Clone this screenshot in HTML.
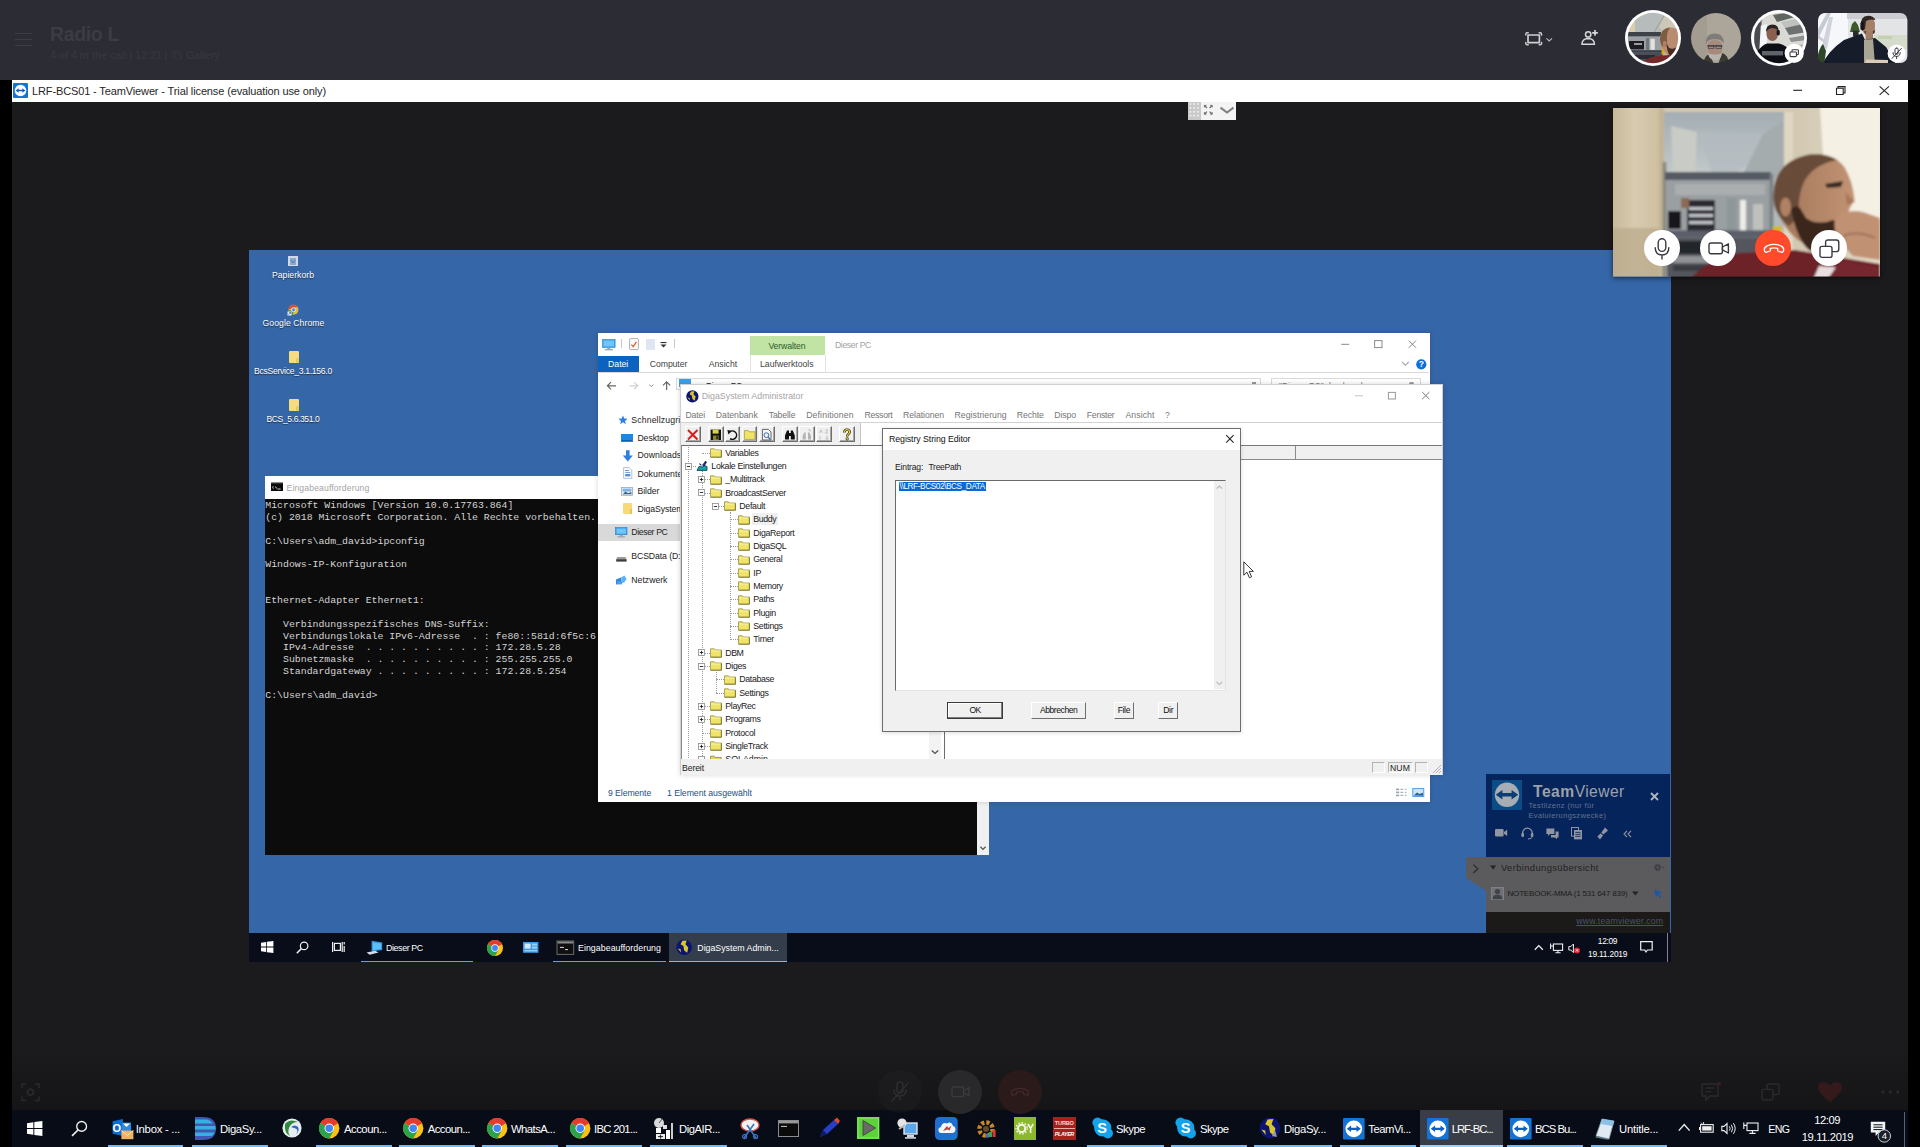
<!DOCTYPE html>
<html lang="de"><head><meta charset="utf-8"><title>Skype - LRF-BCS01 - TeamViewer</title>
<style>
html,body{margin:0;padding:0;background:#000;}
body{width:1920px;height:1147px;position:relative;overflow:hidden;font-family:"Liberation Sans",sans-serif;}
.a{position:absolute;box-sizing:border-box;}
.t{position:absolute;white-space:nowrap;height:20px;line-height:20px;}
svg{overflow:visible}
</style></head><body>
<!-- Skype header -->
<div class="a" style="left:0px;top:0px;width:1920px;height:80px;background:#2b2c34;"></div>
<div class="a" style="left:15px;top:33px;width:17px;height:1.4px;background:#3c3d45;"></div>
<div class="a" style="left:15px;top:39px;width:17px;height:1.4px;background:#3c3d45;"></div>
<div class="a" style="left:15px;top:45px;width:17px;height:1.4px;background:#3c3d45;"></div>
<span class="t" style="left:50.00px;top:24.00px;font-size:19.5px;color:#3b3c44;letter-spacing:-0.357px;font-weight:bold;">Radio L</span>
<span class="t" style="left:50.00px;top:45.00px;font-size:11px;color:#34353d;letter-spacing:-0.321px;font-weight:bold;">4 of 4 in the call | 12:21 |</span>
<span class="t" style="left:186.00px;top:45.00px;font-size:11px;color:#34353d;letter-spacing:-0.543px;font-weight:bold;">Gallery</span>
<svg class="a" style="left:172px;top:50.5px;" width="10" height="9" viewBox="0 0 10 9"><rect x="0.6" y="0.6" width="7" height="5.5" rx="1" fill="none" stroke="#34353d" stroke-width="1.2"/><rect x="3" y="3" width="6.4" height="5" rx="1" fill="#2b2c34" stroke="#34353d" stroke-width="1.2"/></svg>
<svg class="a" style="left:1524.6px;top:32.1px;" width="30" height="15" viewBox="0 0 30 15"><g fill="none" stroke="#d0d0d3" stroke-linecap="round" stroke-linejoin="round">
<rect x="3" y="3" width="11.4" height="7.6" stroke-width="1.7"/>
<path d="M0.8 3V2.4Q0.8 0.8 2.4 0.8H3.2M14.2 0.8H15Q16.6 0.8 16.6 2.4V3M16.6 10.6V11.2Q16.6 12.8 15 12.8H14.2M3.2 12.8H2.4Q0.8 12.8 0.8 11.2V10.6" stroke-width="1.5"/>
</g><path d="M21.4 6.4L24.2 8.9L27 6.4" fill="none" stroke="#bcbcc0" stroke-width="1.1"/></svg>
<svg class="a" style="left:1581px;top:29.4px;" width="18" height="17" viewBox="0 0 18 17"><g fill="none" stroke="#d8d8da" stroke-width="1.5" stroke-linecap="round" stroke-linejoin="round">
<circle cx="7.2" cy="5.4" r="2.7"/><path d="M0.9 15.2Q1.2 9.8 7.2 9.6Q13.2 9.8 13.5 15.2Z"/>
<path d="M14 1.6V6M11.8 3.8H16.2" stroke-width="1.7"/></g></svg>
<svg class="a" style="left:1625px;top:10px" width="56" height="56" viewBox="0 0 56 56">
<defs><clipPath id="av1"><circle cx="28" cy="28" r="25.2"/></clipPath><filter id="ab" x="-10%" y="-10%" width="120%" height="120%"><feGaussianBlur stdDeviation="0.55"/></filter></defs>
<circle cx="28" cy="28" r="28" fill="#fff"/>
<g clip-path="url(#av1)"><g filter="url(#ab)">
<rect x="-2" y="-2" width="60" height="60" fill="#b6bcbc"/>
<path d="M-2 -2H24L20 6H8L4 24H-2Z" fill="#cbc3ab"/>
<path d="M4 12H10V22H4Z" fill="#d9cfae"/>
<path d="M40 4L58 -2V24H46L34 18Z" fill="#cdc7b5"/>
<path d="M39 6L28 24" stroke="#a09c90" stroke-width="1"/>
<rect x="2" y="22" width="34" height="4.6" fill="#3e4248"/>
<rect x="2" y="26.6" width="36" height="14" fill="#9aa0a4"/>
<rect x="4" y="31" width="15" height="8.4" fill="#1c1d22"/>
<rect x="9" y="33" width="8" height="2" fill="#9a9ca0"/>
<rect x="25.4" y="28.8" width="4.4" height="11" fill="#e2e2de"/>
<rect x="21" y="28" width="3" height="12" fill="#70787c"/>
<rect x="2" y="40.2" width="36" height="2.6" fill="#3a3d4a"/>
<rect x="2" y="42.8" width="36" height="14" fill="#4a4d55"/>
<rect x="8" y="45" width="22" height="4" fill="#2a2c33"/>
<rect x="36.6" y="36.6" width="3" height="8" fill="#d6ae28"/>
<path d="M35 30Q35 18 45 17.4Q52 17.4 56 22V46H44Q36 40 35 30Z" fill="#b88c6f"/>
<path d="M35 30Q35 18.4 45 17.4Q41 22 42 32L38 37Q35.4 34 35 30Z" fill="#7d5b42"/>
<ellipse cx="39.6" cy="34" rx="1.8" ry="3.2" fill="#ad8064"/>
<path d="M41.4 33L44 38Q48 40 52 37L54 44Q50 48 45 46Q42 42 41.4 33Z" fill="#46291f"/>
<path d="M14 58Q18 48 32 46L44 45L52 48L58 44V58Z" fill="#742a2c"/>
</g></g></svg>
<svg class="a" style="left:1691px;top:13px" width="50" height="50" viewBox="0 0 50 50">
<defs><clipPath id="av2"><circle cx="25" cy="25" r="25"/></clipPath></defs>
<g clip-path="url(#av2)"><g filter="url(#ab)">
<rect x="-2" y="-2" width="54" height="54" fill="#aca599"/>
<path d="M-2 -2H16V52H-2Z" fill="#a39c91"/>
<path d="M12 52Q13 42 19 41L23 52ZM38 52Q37 41 31 40L27 52Z" fill="#3b3a30"/>
<path d="M16.2 34Q16 27 24 27Q31.4 27 31.2 34L30.6 40Q28 46 24 46Q19.6 46 17 40Z" fill="#a88a7b"/>
<path d="M15 31Q14 20.6 24 20.4Q33.6 20.6 32.6 31Q31 26 24 26.4Q17 26 15 31Z" fill="#7f7d7a"/>
<path d="M17 39.4Q19 42 24 41.4Q29 42 30.8 39.4Q30.6 47 24 47.4Q17.6 47 17 39.4Z" fill="#b7b4b0"/>
<rect x="16.4" y="32.2" width="15" height="1.5" fill="#43454b"/>
<rect x="17.4" y="32.6" width="5.4" height="3" fill="none" stroke="#43454b" stroke-width=".7"/>
<rect x="25" y="32.6" width="5.4" height="3" fill="none" stroke="#43454b" stroke-width=".7"/>
</g></g></svg>
<svg class="a" style="left:1751px;top:10px" width="56" height="56" viewBox="0 0 56 56">
<defs><clipPath id="av3"><circle cx="28" cy="28" r="25.2"/></clipPath></defs>
<circle cx="28" cy="28" r="28" fill="#fff"/>
<g clip-path="url(#av3)"><g filter="url(#ab)">
<rect x="-2" y="-2" width="60" height="60" fill="#d9d9d5"/>
<path d="M-2 -2H12L8 58H-2Z" fill="#8a8c8f"/>
<path d="M9 16L16 14V34L8 40Z" fill="#f4f5f6"/>
<path d="M4 14L10 12L8 44L3 46Z" fill="#4a4b50"/>
<path d="M22 5L40 2L44 7L26 12Z" fill="#5f655f"/>
<path d="M30 12L50 8L56 14L34 18Z" fill="#bfc1be"/>
<path d="M34 18L52 14L56 22L38 25Z" fill="#6d6f70"/>
<path d="M38 28L56 25V30L40 32Z" fill="#8f9190"/>
<path d="M36 36L56 34V40L38 42Z" fill="#b4b5b2"/>
<path d="M15.4 24Q15 15 21.4 15Q27.4 15.4 27 24Q26.6 30.6 21.4 31Q16 30.6 15.4 24Z" fill="#8a5e50"/>
<path d="M15 22Q15 14.6 21.6 14.6Q27.6 14.8 27.6 21Q25 17.6 21 18Q17 18.4 15 22Z" fill="#2c2422"/>
<rect x="25.6" y="20" width="3.2" height="5.4" rx="1.4" fill="#15151a"/>
<path d="M2 56Q4 38 16 33.4H28Q36 35 39 42L41 58H2Z" fill="#0d1018"/>
<path d="M11 41H32V45.4H11Z" fill="#7d8088" opacity=".75"/>
<path d="M20 54H34V57H20Z" fill="#b48a78"/>
</g></g>
<circle cx="43.2" cy="43.3" r="9.6" fill="#fff"/>
<g fill="none" stroke="#3a3b42" stroke-width="1.1"><rect x="39" y="42" width="6.4" height="4.6" rx="0.8"/><path d="M41 42V40.6Q41 39.8 41.8 39.8H46.6Q47.4 39.8 47.4 40.6V43.8Q47.4 44.6 46.6 44.6H45.4"/></g>
</svg>
<svg class="a" style="left:1818px;top:13px" width="90" height="50" viewBox="0 0 90 50">
<defs><clipPath id="av4"><rect width="89.4" height="50" rx="7"/></clipPath></defs>
<g clip-path="url(#av4)"><g filter="url(#ab)">
<rect x="-2" y="-2" width="94" height="54" fill="#e2e4e6"/>
<rect x="-2" y="-2" width="32" height="54" fill="#f5f7fa"/>
<path d="M-2 20L10 -2H14L0 26Z" fill="#c6cad2"/>
<path d="M4 34L11 4L15 4L9 36Z" fill="#d0d3da"/>
<path d="M0 22L8 28L7 30L-1 25Z" fill="#c9cdd4"/>
<rect x="29" y="-2" width="63" height="8" fill="#cbcdd2"/>
<rect x="56" y="22" width="36" height="14" fill="#d6dccb"/>
<rect x="60" y="23" width="14" height="3" fill="#b7cfa0" opacity=".7"/>
<path d="M32 19L34 11L37 8L40 12L42 19Z" fill="#3d5a2c"/>
<rect x="35" y="17.6" width="5.6" height="6" fill="#2a2b2e"/>
<path d="M-2 50Q1 34 5 31L8 38L6 52H-2Z" fill="#2f4a2a"/>
<path d="M43.6 14Q43 3.6 50 3.4Q57.6 3.6 57 14Q56.6 22 51 22.6Q45 22.6 43.6 14Z" fill="#a58069"/>
<path d="M43 13Q42 3 50 2.8Q56 3 57.4 7Q52 5.6 48 8L47 16L44 18Z" fill="#2e2522"/>
<rect x="42.4" y="9" width="3.6" height="8" rx="1.6" fill="#17171b"/>
<path d="M46 18Q47 23 52 23L56.6 20L57 16Q55 20 51 19.6Z" fill="#3e2c25"/>
<rect x="47.6" y="19" width="7.4" height="9" fill="#a27c66"/>
<path d="M4 52Q10 38 26 27L44 20.6L47 27L57 25L68 34L74 44L78 52Z" fill="#171c2a"/>
<path d="M46 27L55 26L57 52H46Z" fill="#a9a595"/>
<path d="M47 52H70V47L48 46.4Z" fill="#dccbb6"/>
</g></g>
<circle cx="78.6" cy="40.5" r="9" fill="#fff"/>
<g fill="none" stroke="#3a3b42" stroke-width="1" stroke-linecap="round"><rect x="77" y="35" width="3.2" height="6.4" rx="1.6"/><path d="M75 39.6Q75 43.4 78.6 43.4Q82.2 43.4 82.2 39.6M78.6 43.4V45.6M74 45.4L83.4 35.4"/></g>
</svg>
<!-- shared screen: TeamViewer window -->
<div class="a" style="left:12px;top:80px;width:1896px;height:1067px;background:#1b1b1d;"></div>
<div class="a" style="left:12px;top:80px;width:1896px;height:22px;background:#fff;"></div>
<svg class="a" style="left:13.4px;top:83px;" width="15" height="15" viewBox="0 0 16 16"><rect width="16" height="16" rx="1" fill="#1373d6"/><circle cx="8" cy="8" r="6.2" fill="#fff"/><path d="M2.8 8L6 5.6V7.2H10V5.6L13.2 8L10 10.4V8.8H6V10.4Z" fill="#0e5fc0"/></svg>
<span class="t" style="left:32.00px;top:80.60px;font-size:11px;color:#262626;letter-spacing:-0.127px;">LRF-BCS01 - TeamViewer - Trial license (evaluation use only)</span>
<svg class="a" style="left:1790px;top:84px;" width="104" height="14" viewBox="0 0 104 14"><g fill="none" stroke="#222" stroke-width="1.1"><path d="M3.2 6.3H12"/><path d="M46.5 4.2H53.2V10.5H46.5ZM48 4.2V2.6H55V9H53.2"/><path d="M89.6 2.4L99 10.8M99 2.4L89.6 10.8"/></g></svg>
<div class="a" style="left:1188px;top:102px;width:48px;height:17.5px;background:#f3f3f3;"></div>
<div class="a" style="left:1188px;top:102px;width:12.6px;height:17.5px;background:#c9c9c9;"></div>
<svg class="a" style="left:1188px;top:102px;" width="13" height="18" viewBox="0 0 13 18"><rect x="1.6" y="1.2" width="1.6" height="1.6" fill="#f4f4f4"/><rect x="1.6" y="5.1" width="1.6" height="1.6" fill="#f4f4f4"/><rect x="1.6" y="9" width="1.6" height="1.6" fill="#f4f4f4"/><rect x="1.6" y="12.9" width="1.6" height="1.6" fill="#f4f4f4"/><rect x="5.4" y="1.2" width="1.6" height="1.6" fill="#f4f4f4"/><rect x="5.4" y="5.1" width="1.6" height="1.6" fill="#f4f4f4"/><rect x="5.4" y="9" width="1.6" height="1.6" fill="#f4f4f4"/><rect x="5.4" y="12.9" width="1.6" height="1.6" fill="#f4f4f4"/><rect x="9.2" y="1.2" width="1.6" height="1.6" fill="#f4f4f4"/><rect x="9.2" y="5.1" width="1.6" height="1.6" fill="#f4f4f4"/><rect x="9.2" y="9" width="1.6" height="1.6" fill="#f4f4f4"/><rect x="9.2" y="12.9" width="1.6" height="1.6" fill="#f4f4f4"/></svg>
<svg class="a" style="left:1203px;top:104px;" width="32" height="14" viewBox="0 0 32 14"><g fill="none" stroke="#6a6a6a" stroke-width="1.2"><path d="M1.6 1.6L4 4M9 1.6L6.6 4M1.6 10L4 7.6M9 10L6.6 7.6"/><path d="M1.4 3.4V1.4H3.4M7.2 1.4H9.2V3.4M9.2 8.2V10.2H7.2M3.4 10.2H1.4V8.2" stroke-width="1"/></g><path d="M17.5 3.6L24 8.6L30.5 3.6" fill="none" stroke="#808080" stroke-width="2"/></svg>
<!-- remote desktop -->
<div class="a" style="left:249px;top:249.5px;width:1422px;height:712.5px;background:#3566a8;"></div>
<svg class="a" style="left:287px;top:255px;" width="12" height="12" viewBox="0 0 12 12"><rect x="1" y="1" width="10" height="10" fill="#cfd9e6"/><rect x="3" y="3" width="6" height="7" fill="#8fa8c8"/><path d="M4 5L6 8L8 5" stroke="#3d7fd0" fill="none"/></svg>
<span class="t" style="left:272.00px;top:264.50px;font-size:8.6px;color:#fff;letter-spacing:0.041px;text-shadow:0 1px 1px rgba(0,0,0,.55);">Papierkorb</span>
<svg class="a" style="left:287px;top:303.5px;" width="12" height="12" viewBox="0 0 12 12"><circle cx="6.5" cy="5.8" r="5" fill="#e8b93a"/><path d="M1.5 5.8A5 5 0 0 1 10.8 3.3H6.5Z" fill="#d9463a"/><path d="M1.5 5.8Q2 9.5 5.5 10.7L7.5 7Z" fill="#4d9e4f"/><circle cx="6.5" cy="5.8" r="2" fill="#4c8bf0" stroke="#fff" stroke-width=".7"/><rect x="0.5" y="7.5" width="4" height="4" fill="#e9eef6"/><path d="M1.3 10.6L3.6 8.4M3.6 8.4H2M3.6 8.4V10" stroke="#2c66c4" stroke-width=".7" fill="none"/></svg>
<span class="t" style="left:262.50px;top:312.50px;font-size:8.6px;color:#fff;letter-spacing:0.099px;text-shadow:0 1px 1px rgba(0,0,0,.55);">Google Chrome</span>
<div class="a" style="left:288.5px;top:351px;width:10px;height:11.5px;background:#f7dc7e;border-radius:1px;"></div>
<div class="a" style="left:296px;top:358px;width:2.5px;height:4.5px;background:#e9c85e;"></div>
<span class="t" style="left:254.00px;top:360.80px;font-size:8.6px;color:#fff;letter-spacing:-0.283px;text-shadow:0 1px 1px rgba(0,0,0,.55);">BcsService_3.1.156.0</span>
<div class="a" style="left:288.5px;top:399px;width:10px;height:11.5px;background:#f7dc7e;border-radius:1px;"></div>
<div class="a" style="left:296px;top:406px;width:2.5px;height:4.5px;background:#e9c85e;"></div>
<span class="t" style="left:266.50px;top:408.80px;font-size:8.6px;color:#fff;letter-spacing:-0.410px;text-shadow:0 1px 1px rgba(0,0,0,.55);">BCS_5.6.351.0</span>
<!-- cmd window -->
<div class="a" style="left:265px;top:476px;width:724px;height:379px;background:#0c0c0c;"></div>
<div class="a" style="left:265px;top:476px;width:724px;height:23px;background:#fff;"></div>
<svg class="a" style="left:271.2px;top:482.4px;" width="12" height="9" viewBox="0 0 12 9"><rect width="12" height="9" fill="#0a0a0a"/><rect x="0" y="0" width="12" height="1.3" fill="#8a8a8a"/><path d="M2.2 4.2Q1.4 5.4 2.2 6.6M4 4.6L6 6.4M6.4 7H9.6" stroke="#e4e4e4" stroke-width=".9" fill="none"/></svg>
<span class="t" style="left:286.50px;top:477.60px;font-size:8.6px;color:#a4a4a4;letter-spacing:0.148px;">Eingabeaufforderung</span>
<div class="a" style="left:977px;top:499px;width:12px;height:356px;background:#f0f0f0;"></div>
<svg class="a" style="left:979px;top:844px;" width="8" height="8" viewBox="0 0 8 8"><path d="M1.4 2.8L4 5.4L6.6 2.8" fill="none" stroke="#555" stroke-width="1.3"/></svg>
<span class="t" style="left:265.3px;top:496.00px;font-size:9.86px;font-family:'Liberation Mono',monospace;color:#d4d4d4;letter-spacing:-0.002px;white-space:pre;">Microsoft Windows [Version 10.0.17763.864]</span>
<span class="t" style="left:265.3px;top:507.87px;font-size:9.86px;font-family:'Liberation Mono',monospace;color:#d4d4d4;letter-spacing:-0.002px;white-space:pre;">(c) 2018 Microsoft Corporation. Alle Rechte vorbehalten.</span>
<span class="t" style="left:265.3px;top:531.61px;font-size:9.86px;font-family:'Liberation Mono',monospace;color:#d4d4d4;letter-spacing:-0.002px;white-space:pre;">C:\Users\adm_david&gt;ipconfig</span>
<span class="t" style="left:265.3px;top:555.35px;font-size:9.86px;font-family:'Liberation Mono',monospace;color:#d4d4d4;letter-spacing:-0.002px;white-space:pre;">Windows-IP-Konfiguration</span>
<span class="t" style="left:265.3px;top:590.96px;font-size:9.86px;font-family:'Liberation Mono',monospace;color:#d4d4d4;letter-spacing:-0.002px;white-space:pre;">Ethernet-Adapter Ethernet1:</span>
<span class="t" style="left:265.3px;top:614.70px;font-size:9.86px;font-family:'Liberation Mono',monospace;color:#d4d4d4;letter-spacing:-0.002px;white-space:pre;">   Verbindungsspezifisches DNS-Suffix:</span>
<span class="t" style="left:265.3px;top:626.57px;font-size:9.86px;font-family:'Liberation Mono',monospace;color:#d4d4d4;letter-spacing:-0.002px;white-space:pre;">   Verbindungslokale IPv6-Adresse  . : fe80::581d:6f5c:6</span>
<span class="t" style="left:265.3px;top:638.44px;font-size:9.86px;font-family:'Liberation Mono',monospace;color:#d4d4d4;letter-spacing:-0.002px;white-space:pre;">   IPv4-Adresse  . . . . . . . . . . : 172.28.5.28</span>
<span class="t" style="left:265.3px;top:650.31px;font-size:9.86px;font-family:'Liberation Mono',monospace;color:#d4d4d4;letter-spacing:-0.002px;white-space:pre;">   Subnetzmaske  . . . . . . . . . . : 255.255.255.0</span>
<span class="t" style="left:265.3px;top:662.18px;font-size:9.86px;font-family:'Liberation Mono',monospace;color:#d4d4d4;letter-spacing:-0.002px;white-space:pre;">   Standardgateway . . . . . . . . . : 172.28.5.254</span>
<span class="t" style="left:265.3px;top:685.92px;font-size:9.86px;font-family:'Liberation Mono',monospace;color:#d4d4d4;letter-spacing:-0.002px;white-space:pre;">C:\Users\adm_david&gt;</span>
<!-- explorer window -->
<div class="a" style="left:597.5px;top:333.3px;width:832px;height:468.4px;background:#fff;box-shadow:0 0 5px rgba(0,0,0,.16);"></div>
<svg class="a" style="left:602.4px;top:338.6px;" width="14" height="12" viewBox="0 0 14 12"><rect x="0.5" y="0.5" width="12.6" height="8" fill="#39a3ee" stroke="#2a7fc8" stroke-width=".6"/><rect x="1.6" y="1.6" width="10.4" height="5.8" fill="#6ec6fb"/><rect x="5.2" y="8.6" width="3.2" height="1.6" fill="#9aa7b4"/><rect x="2.6" y="10.2" width="8.4" height="1.1" fill="#8c98a6"/></svg>
<div class="a" style="left:620.5px;top:339px;width:1px;height:9px;background:#c8c8c8;"></div>
<svg class="a" style="left:629px;top:338px;" width="11" height="13" viewBox="0 0 11 13"><rect x="0.6" y="0.6" width="8.8" height="11" rx="1" fill="#fdfdfd" stroke="#9a9a9a" stroke-width=".8"/><path d="M2.4 6.6L4.2 8.6L7.4 3.8" fill="none" stroke="#e0632a" stroke-width="1.3"/></svg>
<div class="a" style="left:646px;top:338.5px;width:9px;height:11.5px;background:#dfe5f3;"></div>
<svg class="a" style="left:660px;top:342px;" width="8" height="6" viewBox="0 0 8 6"><rect x="0.5" y="0" width="6" height="1.1" fill="#333"/><path d="M0.5 2.4H6.5L3.5 5.4Z" fill="#333"/></svg>
<div class="a" style="left:673.5px;top:339px;width:1px;height:9px;background:#c8c8c8;"></div>
<div class="a" style="left:750px;top:336px;width:75.3px;height:19.3px;background:#c1e4a5;"></div>
<span class="t" style="left:768.40px;top:336.20px;font-size:8.7px;color:#2c5a2a;letter-spacing:-0.112px;">Verwalten</span>
<span class="t" style="left:835.00px;top:334.60px;font-size:8.7px;color:#a2a2a2;letter-spacing:-0.405px;">Dieser PC</span>
<svg class="a" style="left:1338px;top:338px;" width="84" height="14" viewBox="0 0 84 14"><g fill="none" stroke="#8a8a8a" stroke-width="1"><path d="M3.2 6.3H11.2"/><rect x="36.6" y="2.6" width="7.4" height="7"/><path d="M70.8 2.6L78 9.8M78 2.6L70.8 9.8"/></g></svg>
<div class="a" style="left:598px;top:355.7px;width:41px;height:16.6px;background:#0b62bf;"></div>
<span class="t" style="left:608.10px;top:354.30px;font-size:8.7px;color:#fff;letter-spacing:-0.022px;">Datei</span>
<span class="t" style="left:649.80px;top:354.30px;font-size:8.7px;color:#444;letter-spacing:-0.087px;">Computer</span>
<span class="t" style="left:708.70px;top:354.30px;font-size:8.7px;color:#444;letter-spacing:-0.004px;">Ansicht</span>
<span class="t" style="left:760.00px;top:354.30px;font-size:8.7px;color:#444;letter-spacing:0.002px;">Laufwerktools</span>
<div class="a" style="left:750px;top:355.3px;width:1px;height:17px;background:#e4e4e4;"></div>
<div class="a" style="left:824.5px;top:355.3px;width:1px;height:17px;background:#e4e4e4;"></div>
<div class="a" style="left:598px;top:372px;width:831px;height:1px;background:#dadada;"></div>
<svg class="a" style="left:1401px;top:361px;" width="9" height="6" viewBox="0 0 9 6"><path d="M1 1L4.4 4.2L7.8 1" fill="none" stroke="#aaa" stroke-width="1.1"/></svg>
<svg class="a" style="left:1416px;top:358.6px;" width="11" height="11" viewBox="0 0 11 11"><circle cx="5.3" cy="5.3" r="5.1" fill="#0a6fd8"/></svg>
<span class="t" style="left:1418.70px;top:354.00px;font-size:8.5px;color:#fff;font-weight:bold;">?</span>
<svg class="a" style="left:605px;top:380px;" width="70" height="12" viewBox="0 0 70 12"><g fill="none" stroke-width="1.2"><path d="M11 5.8H2.6M6 2.2L2.4 5.8L6 9.4" stroke="#666"/><path d="M24.5 5.8H32.5M29.2 2.4L32.7 5.8L29.2 9.2" stroke="#d0d0d0"/><path d="M44.4 4.6L46.4 6.6L48.4 4.6" stroke="#888" stroke-width="1"/><path d="M61.6 10V2M58 5.4L61.6 1.8L65.2 5.4" stroke="#666"/></g></svg>
<div class="a" style="left:676px;top:377.7px;width:585px;height:12px;background:#fff;border:1px solid #d9d9d9;"></div>
<div class="a" style="left:679px;top:378.5px;width:12px;height:8px;background:#3aa0ea;"></div>
<div class="a" style="left:1271px;top:377.7px;width:150px;height:12px;background:#fff;border:1px solid #d9d9d9;"></div>
<span class="t" style="left:706.00px;top:376.00px;font-size:8.7px;color:#222;letter-spacing:-0.405px;">Dieser PC</span>
<span class="t" style="left:1279.00px;top:376.00px;font-size:8.7px;color:#777;letter-spacing:-0.089px;">&quot;Dieser PC&quot; durchsuchen</span>
<div class="a" style="left:1252px;top:382px;width:4px;height:4px;background:#999;"></div>
<div class="a" style="left:1409px;top:382.4px;width:5px;height:4px;background:#999;border-radius:3px;"></div>
<svg class="a" style="left:617.5px;top:415.3px;" width="10" height="10" viewBox="0 0 10 10"><path d="M5 0.4L6.3 3.6L9.6 3.8L7 5.9L7.9 9.2L5 7.3L2.1 9.2L3 5.9L0.4 3.8L3.7 3.6Z" fill="#2f7fe0"/></svg>
<span class="t" style="left:631.30px;top:410.00px;font-size:8.7px;color:#222;letter-spacing:0.138px;">Schnellzugriff</span>
<div class="a" style="left:620.8px;top:433.6px;width:12.5px;height:8.8px;background:#1b87e8;"></div>
<div class="a" style="left:622.2px;top:440px;width:9.6px;height:1.4px;background:#0e5fb0;"></div>
<span class="t" style="left:637.40px;top:428.20px;font-size:8.7px;color:#222;letter-spacing:-0.059px;">Desktop</span>
<svg class="a" style="left:622px;top:449.6px;" width="12" height="12" viewBox="0 0 12 12"><path d="M4 0.3H7.6V5.4H10.8L5.8 11.4L0.8 5.4H4Z" fill="#2e7fdf"/></svg>
<span class="t" style="left:637.40px;top:445.40px;font-size:8.7px;color:#222;letter-spacing:0.106px;">Downloads</span>
<svg class="a" style="left:622.6px;top:467px;" width="10" height="12" viewBox="0 0 10 12"><path d="M0.6 0.6H6.2L8.8 3.2V11.4H0.6Z" fill="#fbfcfe" stroke="#a9b3c0" stroke-width=".8"/><rect x="2.2" y="3" width="3.6" height="1" fill="#4b8fe0"/><rect x="2.2" y="5" width="5" height="1" fill="#6ea5e6"/><rect x="2.2" y="7" width="5" height="2.4" fill="#4b8fe0"/></svg>
<span class="t" style="left:637.40px;top:463.60px;font-size:8.7px;color:#222;letter-spacing:0.057px;">Dokumente</span>
<svg class="a" style="left:621px;top:487px;" width="12" height="9" viewBox="0 0 12 9"><rect x="0.5" y="0.5" width="11" height="7.8" fill="#eef3f8" stroke="#9aa6b4" stroke-width=".8"/><rect x="1.6" y="1.6" width="8.8" height="3" fill="#7fb4ea"/><path d="M1.6 7.2L4.6 4.4L7 6.2L10.4 5V7.2Z" fill="#3b5f88"/></svg>
<span class="t" style="left:637.50px;top:481.30px;font-size:8.7px;color:#222;letter-spacing:-0.074px;">Bilder</span>
<div class="a" style="left:622.8px;top:503px;width:9.6px;height:11.4px;background:#f8d977;border-radius:1px;"></div>
<div class="a" style="left:629.8px;top:509px;width:2.6px;height:5.4px;background:#e9c45a;"></div>
<span class="t" style="left:637.50px;top:498.80px;font-size:8.7px;color:#222;letter-spacing:-0.090px;">DigaSystem</span>
<div class="a" style="left:598px;top:523.9px;width:82.5px;height:17.2px;background:#d9d9d9;"></div>
<svg class="a" style="left:615px;top:527px;" width="13" height="11" viewBox="0 0 13 11"><rect x="0.5" y="0.5" width="11.5" height="7.2" fill="#39a3ee" stroke="#2a7fc8" stroke-width=".6"/><rect x="1.6" y="1.6" width="9.3" height="5" fill="#6ec6fb"/><rect x="4.6" y="7.8" width="3.2" height="1.6" fill="#9aa7b4"/><rect x="2.4" y="9.4" width="7.6" height="1" fill="#8c98a6"/></svg>
<span class="t" style="left:631.30px;top:522.40px;font-size:8.7px;color:#222;letter-spacing:-0.383px;">Dieser PC</span>
<svg class="a" style="left:616px;top:555.5px;" width="11" height="6" viewBox="0 0 11 6"><path d="M1.4 1H9.4L10.6 3.2H0.2Z" fill="#9a9a9a"/><rect x="0.2" y="3.2" width="10.4" height="2.4" fill="#3c3c3c"/></svg>
<span class="t" style="left:631.30px;top:546.20px;font-size:8.7px;color:#222;letter-spacing:-0.098px;">BCSData (D:)</span>
<svg class="a" style="left:615px;top:574.6px;" width="12" height="10" viewBox="0 0 12 10"><path d="M1 4.6L6.4 2.2V8.6L1 9.6Z" fill="#2f8ae4"/><path d="M6.4 2.2L9.4 0.6L11.6 4L9.4 7.2L6.4 8.6Z" fill="#5db2f4"/><rect x="2" y="6.4" width="5" height="3" fill="#4aa0ee"/></svg>
<span class="t" style="left:631.30px;top:570.00px;font-size:8.7px;color:#222;letter-spacing:-0.007px;">Netzwerk</span>
<span class="t" style="left:608.00px;top:783.20px;font-size:8.7px;color:#234f8c;letter-spacing:-0.081px;">9 Elemente</span>
<span class="t" style="left:667.00px;top:783.20px;font-size:8.7px;color:#234f8c;letter-spacing:-0.030px;">1 Element ausgewählt</span>
<svg class="a" style="left:1395.5px;top:787.5px;" width="30" height="10" viewBox="0 0 30 10"><g fill="#9aa3ad"><rect x="0" y="0.6" width="3.2" height="1.6"/><rect x="0" y="3.6" width="3.2" height="1.6"/><rect x="0" y="6.6" width="3.2" height="1.6"/><rect x="4.4" y="0.8" width="3" height="1"/><rect x="4.4" y="3.8" width="3" height="1"/><rect x="4.4" y="6.8" width="3" height="1"/><rect x="9" y="0.8" width="1.6" height="1"/><rect x="9" y="3.8" width="1.6" height="1"/><rect x="9" y="6.8" width="1.6" height="1"/></g><rect x="16.8" y="0.6" width="11" height="8" fill="#cfe3f7" stroke="#4a90d9" stroke-width=".9"/><path d="M17.6 7.6L21 4.4L23.4 6L27 4.8V7.8Z" fill="#35618f"/></svg>
<!-- DigaSystem Administrator window -->
<div class="a" style="left:680px;top:384px;width:763px;height:391px;background:#fff;box-shadow:0 0 5px rgba(0,0,0,.16);border:1px solid #cfcfcf;"></div>
<svg class="a" style="left:685.5px;top:389.5px;" width="13" height="13" viewBox="0 0 13 13"><circle cx="6.4" cy="6.4" r="6.1" fill="#0d1470"/><path d="M5 1.4L8.4 1.2L7.4 4.2L9.6 6.6L8.8 10.8L6.4 9L5.8 5.4L3.6 4.2Z" fill="#d9c62e"/><path d="M1.4 7.4L3.6 8L4 10.6Z" fill="#d9c62e"/></svg>
<span class="t" style="left:701.70px;top:386.40px;font-size:8.8px;color:#a5a5a5;letter-spacing:0.023px;">DigaSystem Administrator</span>
<svg class="a" style="left:1352px;top:389px;" width="84" height="14" viewBox="0 0 84 14"><g fill="none" stroke-width="1"><path d="M3 6.8H11" stroke="#c4c4c4"/><rect x="36.4" y="3.4" width="7" height="6.6" stroke="#9a9a9a"/><path d="M70.2 3L77.4 10.2M77.4 3L70.2 10.2" stroke="#7a7a7a"/></g></svg>
<span class="t" style="left:685.50px;top:404.60px;font-size:8.7px;color:#757575;letter-spacing:-0.162px;">Datei</span>
<span class="t" style="left:715.80px;top:404.60px;font-size:8.7px;color:#757575;letter-spacing:-0.009px;">Datenbank</span>
<span class="t" style="left:768.70px;top:404.60px;font-size:8.7px;color:#757575;letter-spacing:-0.124px;">Tabelle</span>
<span class="t" style="left:806.20px;top:404.60px;font-size:8.7px;color:#757575;letter-spacing:0.138px;">Definitionen</span>
<span class="t" style="left:864.50px;top:404.60px;font-size:8.7px;color:#757575;letter-spacing:-0.282px;">Ressort</span>
<span class="t" style="left:903.00px;top:404.60px;font-size:8.7px;color:#757575;letter-spacing:-0.040px;">Relationen</span>
<span class="t" style="left:954.50px;top:404.60px;font-size:8.7px;color:#757575;letter-spacing:0.043px;">Registrierung</span>
<span class="t" style="left:1016.80px;top:404.60px;font-size:8.7px;color:#757575;letter-spacing:-0.094px;">Rechte</span>
<span class="t" style="left:1054.20px;top:404.60px;font-size:8.7px;color:#757575;letter-spacing:-0.049px;">Dispo</span>
<span class="t" style="left:1086.80px;top:404.60px;font-size:8.7px;color:#757575;letter-spacing:-0.256px;">Fenster</span>
<span class="t" style="left:1125.50px;top:404.60px;font-size:8.7px;color:#757575;letter-spacing:0.067px;">Ansicht</span>
<span class="t" style="left:1165.00px;top:404.60px;font-size:8.7px;color:#757575;">?</span>
<div class="a" style="left:681px;top:422.2px;width:761px;height:1.2px;background:#d2d2d2;"></div>
<div class="a" style="left:681px;top:423.4px;width:180px;height:21.6px;background:#f0f0f0;border-right:1px solid #c4c4c4;"></div>
<div class="a" style="left:685px;top:426.4px;width:15.6px;height:15.6px;background:#f0f0f0;border:1px solid;border-color:#fff #6e6e6e #6e6e6e #fff;box-shadow:inset -1px -1px 0 #a8a8a8;"></div>
<svg class="a" style="left:685px;top:426.6px;" width="15.6" height="15" viewBox="0 0 15.6 15"><path d="M3 3L12.5 12.5M12.5 3L3 12.5" stroke="#dc1c1c" stroke-width="2" fill="none"/></svg>
<div class="a" style="left:708px;top:426.4px;width:15.6px;height:15.6px;background:#f0f0f0;border:1px solid;border-color:#fff #6e6e6e #6e6e6e #fff;box-shadow:inset -1px -1px 0 #a8a8a8;"></div>
<svg class="a" style="left:708px;top:426.6px;" width="15.6" height="15" viewBox="0 0 15.6 15"><rect x="2.6" y="2.6" width="10.4" height="10.4" fill="#111"/><rect x="4.6" y="2.6" width="6" height="4" fill="#d9d14a"/><rect x="5" y="8.6" width="5.6" height="4.4" fill="#8a8630"/><rect x="8.4" y="9.2" width="1.4" height="3" fill="#111"/></svg>
<div class="a" style="left:724.6px;top:426.4px;width:15.6px;height:15.6px;background:#f0f0f0;border:1px solid;border-color:#fff #6e6e6e #6e6e6e #fff;box-shadow:inset -1px -1px 0 #a8a8a8;"></div>
<svg class="a" style="left:724.6px;top:426.6px;" width="15.6" height="15" viewBox="0 0 15.6 15"><path d="M4.4 5.2A4.2 4.2 0 1 1 5 11.6" fill="none" stroke="#111" stroke-width="1.5"/><path d="M2.4 3L6.8 3.8L3.4 7.4Z" fill="#111"/></svg>
<div class="a" style="left:741.8px;top:426.4px;width:15.6px;height:15.6px;background:#f0f0f0;border:1px solid;border-color:#fff #6e6e6e #6e6e6e #fff;box-shadow:inset -1px -1px 0 #a8a8a8;"></div>
<svg class="a" style="left:741.8px;top:426.6px;" width="15.6" height="15" viewBox="0 0 15.6 15"><path d="M2.4 3.6H6.4L7.4 4.8H13V12.4H2.4Z" fill="#f0e466" stroke="#9a9040" stroke-width=".7"/></svg>
<div class="a" style="left:759px;top:426.4px;width:15.6px;height:15.6px;background:#f0f0f0;border:1px solid;border-color:#fff #6e6e6e #6e6e6e #fff;box-shadow:inset -1px -1px 0 #a8a8a8;"></div>
<svg class="a" style="left:759px;top:426.6px;" width="15.6" height="15" viewBox="0 0 15.6 15"><path d="M3.4 2.4H9.4L12 5V13H3.4Z" fill="#f4f4f4" stroke="#444" stroke-width=".8"/><circle cx="7.4" cy="8.2" r="2.4" fill="none" stroke="#3a68b0" stroke-width="1"/><path d="M9 10L11.4 12.6" stroke="#3a68b0" stroke-width="1.2"/></svg>
<div class="a" style="left:782px;top:426.4px;width:15.6px;height:15.6px;background:#f0f0f0;border:1px solid;border-color:#fff #6e6e6e #6e6e6e #fff;box-shadow:inset -1px -1px 0 #a8a8a8;"></div>
<svg class="a" style="left:782px;top:426.6px;" width="15.6" height="15" viewBox="0 0 15.6 15"><path d="M3 12.6V8.6L5 3.6H7V12.6ZM12.8 12.6V8.6L10.8 3.6H8.8V12.6Z" fill="#111"/><rect x="6.6" y="6" width="2.6" height="3" fill="#111"/></svg>
<div class="a" style="left:799px;top:426.4px;width:15.6px;height:15.6px;background:#f0f0f0;border:1px solid;border-color:#fff #6e6e6e #6e6e6e #fff;box-shadow:inset -1px -1px 0 #a8a8a8;"></div>
<svg class="a" style="left:799px;top:426.6px;" width="15.6" height="15" viewBox="0 0 15.6 15"><path d="M3.6 12.6V9L5.2 5.6H6.8V12.6ZM12 12.6V9L10.6 5.6H9V12.6Z" fill="#b4b4b4"/><path d="M9 2.4L12 4M10.6 2V4.6" stroke="#c4c4c4" stroke-width=".8"/></svg>
<div class="a" style="left:816px;top:426.4px;width:15.6px;height:15.6px;background:#f0f0f0;border:1px solid;border-color:#fff #6e6e6e #6e6e6e #fff;box-shadow:inset -1px -1px 0 #a8a8a8;"></div>
<svg class="a" style="left:816px;top:426.6px;" width="15.6" height="15" viewBox="0 0 15.6 15"><path d="M3.4 6L4.8 2.8L6.2 6M9.4 3H12L9.4 6H12M4 9V12.6M11 8.6V12.6M9.6 11.2L11 12.6L12.4 11.2" stroke="#bdbdbd" stroke-width=".9" fill="none"/></svg>
<div class="a" style="left:839px;top:426.4px;width:15.6px;height:15.6px;background:#f0f0f0;border:1px solid;border-color:#fff #6e6e6e #6e6e6e #fff;box-shadow:inset -1px -1px 0 #a8a8a8;"></div>
<svg class="a" style="left:839px;top:426.6px;" width="15.6" height="15" viewBox="0 0 15.6 15"><path d="M5.4 5.4Q5.4 2.6 8 2.6Q10.6 2.6 10.6 5Q10.6 6.6 9 7.4Q8.2 7.9 8.2 9.4" fill="none" stroke="#111" stroke-width="2.4"/><path d="M5.4 5.4Q5.4 2.6 8 2.6Q10.6 2.6 10.6 5Q10.6 6.6 9 7.4Q8.2 7.9 8.2 9.4" fill="none" stroke="#e5d534" stroke-width="1.2"/><circle cx="8.2" cy="11.8" r="1.3" fill="#e5d534" stroke="#111" stroke-width=".6"/></svg>
<div class="a" style="left:681px;top:445.2px;width:264px;height:313.8px;background:#fff;border-top:1.6px solid #6d6d6d;border-left:1.6px solid #8a8a8a;"></div>
<div class="a" style="left:944px;top:446px;width:1.4px;height:313px;background:#6d6d6d;"></div>
<div class="a" style="left:929px;top:447px;width:12px;height:312px;background:#f3f3f3;"></div>
<svg class="a" style="left:930px;top:748px;" width="10" height="8" viewBox="0 0 10 8"><path d="M1.8 2.4L5 5.4L8.2 2.4" fill="none" stroke="#555" stroke-width="1.4"/></svg>
<div class="a" style="left:688px;top:447px;width:0px;height:311px;border-left:1px dotted #9a9a9a;"></div>
<div class="a" style="left:701.6px;top:470px;width:0px;height:288px;border-left:1px dotted #9a9a9a;"></div>
<div class="a" style="left:729.5px;top:512px;width:0px;height:128px;border-left:1px dotted #9a9a9a;"></div>
<div class="a" style="left:715.7px;top:672px;width:0px;height:21px;border-left:1px dotted #9a9a9a;"></div>
<div class="a" style="left:702px;top:452.5px;width:8px;height:0px;border-top:1px dotted #9a9a9a;"></div>
<svg class="a" style="left:710px;top:447px;" width="13" height="11" viewBox="0 0 13 11"><path d="M0.5 1.8H4.4L5.4 3H11.4V10.2H0.5Z" fill="#efe368" stroke="#8f8538" stroke-width=".7"/><path d="M1.2 4H10.4" stroke="#fbf6b0" stroke-width=".9"/><path d="M11.4 3.4V10.2H0.8" fill="none" stroke="#6f6626" stroke-width=".7"/></svg>
<span class="t" style="left:725.30px;top:442.50px;font-size:8.8px;color:#1a1a1a;letter-spacing:-0.300px;">Variables</span>
<div class="a" style="left:689px;top:465.8px;width:6.5px;height:0px;border-top:1px dotted #9a9a9a;"></div>
<svg class="a" style="left:695.5px;top:459.8px;" width="13" height="12" viewBox="0 0 13 12"><path d="M1 10.4H11V6.6L8 5.2L7 7L3 6.4Z" fill="#12a7a0" stroke="#0a2c5c" stroke-width=".8"/><path d="M6 5.2L9.4 0.8L11 2L8.4 6.4Z" fill="#15306e"/><path d="M3.4 3.6L5.4 5.4" stroke="#15306e" stroke-width="1.2"/></svg>
<svg class="a" style="left:684.5px;top:462.6px;" width="7" height="7" viewBox="0 0 7 7"><rect x="0.5" y="0.5" width="6" height="6" fill="#fff" stroke="#8c8c8c" stroke-width=".8"/><path d="M1.8 3.5H5.2" stroke="#222" stroke-width=".9"/></svg>
<span class="t" style="left:711.30px;top:455.80px;font-size:8.8px;color:#1a1a1a;letter-spacing:-0.305px;">Lokale Einstellungen</span>
<div class="a" style="left:702px;top:479.2px;width:8px;height:0px;border-top:1px dotted #9a9a9a;"></div>
<svg class="a" style="left:710px;top:473.7px;" width="13" height="11" viewBox="0 0 13 11"><path d="M0.5 1.8H4.4L5.4 3H11.4V10.2H0.5Z" fill="#efe368" stroke="#8f8538" stroke-width=".7"/><path d="M1.2 4H10.4" stroke="#fbf6b0" stroke-width=".9"/><path d="M11.4 3.4V10.2H0.8" fill="none" stroke="#6f6626" stroke-width=".7"/></svg>
<svg class="a" style="left:698.1px;top:476px;" width="7" height="7" viewBox="0 0 7 7"><rect x="0.5" y="0.5" width="6" height="6" fill="#fff" stroke="#8c8c8c" stroke-width=".8"/><path d="M1.8 3.5H5.2" stroke="#222" stroke-width=".9"/><path d="M3.5 1.8V5.2" stroke="#222" stroke-width=".9"/></svg>
<span class="t" style="left:725.30px;top:469.20px;font-size:8.8px;color:#1a1a1a;letter-spacing:-0.290px;">_Multitrack</span>
<div class="a" style="left:702px;top:492.5px;width:8px;height:0px;border-top:1px dotted #9a9a9a;"></div>
<svg class="a" style="left:710px;top:487px;" width="13" height="11" viewBox="0 0 13 11"><path d="M0.5 1.8H4.4L5.4 3H11.4V10.2H0.5Z" fill="#efe368" stroke="#8f8538" stroke-width=".7"/><path d="M1.2 4H10.4" stroke="#fbf6b0" stroke-width=".9"/><path d="M11.4 3.4V10.2H0.8" fill="none" stroke="#6f6626" stroke-width=".7"/></svg>
<svg class="a" style="left:698.1px;top:489.3px;" width="7" height="7" viewBox="0 0 7 7"><rect x="0.5" y="0.5" width="6" height="6" fill="#fff" stroke="#8c8c8c" stroke-width=".8"/><path d="M1.8 3.5H5.2" stroke="#222" stroke-width=".9"/></svg>
<span class="t" style="left:725.30px;top:482.50px;font-size:8.8px;color:#1a1a1a;letter-spacing:-0.328px;">BroadcastServer</span>
<div class="a" style="left:716px;top:505.8px;width:7.8px;height:0px;border-top:1px dotted #9a9a9a;"></div>
<svg class="a" style="left:723.8px;top:500.3px;" width="13" height="11" viewBox="0 0 13 11"><path d="M0.5 1.8H4.4L5.4 3H11.4V10.2H0.5Z" fill="#efe368" stroke="#8f8538" stroke-width=".7"/><path d="M1.2 4H10.4" stroke="#fbf6b0" stroke-width=".9"/><path d="M11.4 3.4V10.2H0.8" fill="none" stroke="#6f6626" stroke-width=".7"/></svg>
<svg class="a" style="left:712.2px;top:502.6px;" width="7" height="7" viewBox="0 0 7 7"><rect x="0.5" y="0.5" width="6" height="6" fill="#fff" stroke="#8c8c8c" stroke-width=".8"/><path d="M1.8 3.5H5.2" stroke="#222" stroke-width=".9"/></svg>
<span class="t" style="left:739.30px;top:495.80px;font-size:8.8px;color:#1a1a1a;letter-spacing:-0.299px;">Default</span>
<div class="a" style="left:730px;top:519.2px;width:8px;height:0px;border-top:1px dotted #9a9a9a;"></div>
<svg class="a" style="left:738px;top:513.7px;" width="13" height="11" viewBox="0 0 13 11"><path d="M0.5 1.8H4.4L5.4 3H11.4V10.2H0.5Z" fill="#efe368" stroke="#8f8538" stroke-width=".7"/><path d="M1.2 4H10.4" stroke="#fbf6b0" stroke-width=".9"/><path d="M11.4 3.4V10.2H0.8" fill="none" stroke="#6f6626" stroke-width=".7"/></svg>
<div class="a" style="left:751.7px;top:513.2px;width:26px;height:12px;background:#f0f0f0;"></div>
<span class="t" style="left:753.30px;top:509.20px;font-size:8.8px;color:#1a1a1a;letter-spacing:-0.374px;">Buddy</span>
<div class="a" style="left:730px;top:532.5px;width:8px;height:0px;border-top:1px dotted #9a9a9a;"></div>
<svg class="a" style="left:738px;top:527px;" width="13" height="11" viewBox="0 0 13 11"><path d="M0.5 1.8H4.4L5.4 3H11.4V10.2H0.5Z" fill="#efe368" stroke="#8f8538" stroke-width=".7"/><path d="M1.2 4H10.4" stroke="#fbf6b0" stroke-width=".9"/><path d="M11.4 3.4V10.2H0.8" fill="none" stroke="#6f6626" stroke-width=".7"/></svg>
<span class="t" style="left:753.30px;top:522.50px;font-size:8.8px;color:#1a1a1a;letter-spacing:-0.334px;">DigaReport</span>
<div class="a" style="left:730px;top:545.8px;width:8px;height:0px;border-top:1px dotted #9a9a9a;"></div>
<svg class="a" style="left:738px;top:540.3px;" width="13" height="11" viewBox="0 0 13 11"><path d="M0.5 1.8H4.4L5.4 3H11.4V10.2H0.5Z" fill="#efe368" stroke="#8f8538" stroke-width=".7"/><path d="M1.2 4H10.4" stroke="#fbf6b0" stroke-width=".9"/><path d="M11.4 3.4V10.2H0.8" fill="none" stroke="#6f6626" stroke-width=".7"/></svg>
<span class="t" style="left:753.30px;top:535.80px;font-size:8.8px;color:#1a1a1a;letter-spacing:-0.383px;">DigaSQL</span>
<div class="a" style="left:730px;top:559.1px;width:8px;height:0px;border-top:1px dotted #9a9a9a;"></div>
<svg class="a" style="left:738px;top:553.6px;" width="13" height="11" viewBox="0 0 13 11"><path d="M0.5 1.8H4.4L5.4 3H11.4V10.2H0.5Z" fill="#efe368" stroke="#8f8538" stroke-width=".7"/><path d="M1.2 4H10.4" stroke="#fbf6b0" stroke-width=".9"/><path d="M11.4 3.4V10.2H0.8" fill="none" stroke="#6f6626" stroke-width=".7"/></svg>
<span class="t" style="left:753.30px;top:549.10px;font-size:8.8px;color:#1a1a1a;letter-spacing:-0.335px;">General</span>
<div class="a" style="left:730px;top:572.5px;width:8px;height:0px;border-top:1px dotted #9a9a9a;"></div>
<svg class="a" style="left:738px;top:567px;" width="13" height="11" viewBox="0 0 13 11"><path d="M0.5 1.8H4.4L5.4 3H11.4V10.2H0.5Z" fill="#efe368" stroke="#8f8538" stroke-width=".7"/><path d="M1.2 4H10.4" stroke="#fbf6b0" stroke-width=".9"/><path d="M11.4 3.4V10.2H0.8" fill="none" stroke="#6f6626" stroke-width=".7"/></svg>
<span class="t" style="left:753.30px;top:562.50px;font-size:8.8px;color:#1a1a1a;letter-spacing:-0.312px;">IP</span>
<div class="a" style="left:730px;top:585.8px;width:8px;height:0px;border-top:1px dotted #9a9a9a;"></div>
<svg class="a" style="left:738px;top:580.3px;" width="13" height="11" viewBox="0 0 13 11"><path d="M0.5 1.8H4.4L5.4 3H11.4V10.2H0.5Z" fill="#efe368" stroke="#8f8538" stroke-width=".7"/><path d="M1.2 4H10.4" stroke="#fbf6b0" stroke-width=".9"/><path d="M11.4 3.4V10.2H0.8" fill="none" stroke="#6f6626" stroke-width=".7"/></svg>
<span class="t" style="left:753.30px;top:575.80px;font-size:8.8px;color:#1a1a1a;letter-spacing:-0.397px;">Memory</span>
<div class="a" style="left:730px;top:599.2px;width:8px;height:0px;border-top:1px dotted #9a9a9a;"></div>
<svg class="a" style="left:738px;top:593.7px;" width="13" height="11" viewBox="0 0 13 11"><path d="M0.5 1.8H4.4L5.4 3H11.4V10.2H0.5Z" fill="#efe368" stroke="#8f8538" stroke-width=".7"/><path d="M1.2 4H10.4" stroke="#fbf6b0" stroke-width=".9"/><path d="M11.4 3.4V10.2H0.8" fill="none" stroke="#6f6626" stroke-width=".7"/></svg>
<span class="t" style="left:753.30px;top:589.20px;font-size:8.8px;color:#1a1a1a;letter-spacing:-0.338px;">Paths</span>
<div class="a" style="left:730px;top:612.5px;width:8px;height:0px;border-top:1px dotted #9a9a9a;"></div>
<svg class="a" style="left:738px;top:607px;" width="13" height="11" viewBox="0 0 13 11"><path d="M0.5 1.8H4.4L5.4 3H11.4V10.2H0.5Z" fill="#efe368" stroke="#8f8538" stroke-width=".7"/><path d="M1.2 4H10.4" stroke="#fbf6b0" stroke-width=".9"/><path d="M11.4 3.4V10.2H0.8" fill="none" stroke="#6f6626" stroke-width=".7"/></svg>
<span class="t" style="left:753.30px;top:602.50px;font-size:8.8px;color:#1a1a1a;letter-spacing:-0.306px;">Plugin</span>
<div class="a" style="left:730px;top:625.8px;width:8px;height:0px;border-top:1px dotted #9a9a9a;"></div>
<svg class="a" style="left:738px;top:620.3px;" width="13" height="11" viewBox="0 0 13 11"><path d="M0.5 1.8H4.4L5.4 3H11.4V10.2H0.5Z" fill="#efe368" stroke="#8f8538" stroke-width=".7"/><path d="M1.2 4H10.4" stroke="#fbf6b0" stroke-width=".9"/><path d="M11.4 3.4V10.2H0.8" fill="none" stroke="#6f6626" stroke-width=".7"/></svg>
<span class="t" style="left:753.30px;top:615.80px;font-size:8.8px;color:#1a1a1a;letter-spacing:-0.298px;">Settings</span>
<div class="a" style="left:730px;top:639.2px;width:8px;height:0px;border-top:1px dotted #9a9a9a;"></div>
<svg class="a" style="left:738px;top:633.7px;" width="13" height="11" viewBox="0 0 13 11"><path d="M0.5 1.8H4.4L5.4 3H11.4V10.2H0.5Z" fill="#efe368" stroke="#8f8538" stroke-width=".7"/><path d="M1.2 4H10.4" stroke="#fbf6b0" stroke-width=".9"/><path d="M11.4 3.4V10.2H0.8" fill="none" stroke="#6f6626" stroke-width=".7"/></svg>
<span class="t" style="left:753.30px;top:629.20px;font-size:8.8px;color:#1a1a1a;letter-spacing:-0.332px;">Timer</span>
<div class="a" style="left:702px;top:652.5px;width:8px;height:0px;border-top:1px dotted #9a9a9a;"></div>
<svg class="a" style="left:710px;top:647px;" width="13" height="11" viewBox="0 0 13 11"><path d="M0.5 1.8H4.4L5.4 3H11.4V10.2H0.5Z" fill="#efe368" stroke="#8f8538" stroke-width=".7"/><path d="M1.2 4H10.4" stroke="#fbf6b0" stroke-width=".9"/><path d="M11.4 3.4V10.2H0.8" fill="none" stroke="#6f6626" stroke-width=".7"/></svg>
<svg class="a" style="left:698.1px;top:649.3px;" width="7" height="7" viewBox="0 0 7 7"><rect x="0.5" y="0.5" width="6" height="6" fill="#fff" stroke="#8c8c8c" stroke-width=".8"/><path d="M1.8 3.5H5.2" stroke="#222" stroke-width=".9"/><path d="M3.5 1.8V5.2" stroke="#222" stroke-width=".9"/></svg>
<span class="t" style="left:725.30px;top:642.50px;font-size:8.8px;color:#1a1a1a;letter-spacing:-0.489px;">DBM</span>
<div class="a" style="left:702px;top:665.8px;width:8px;height:0px;border-top:1px dotted #9a9a9a;"></div>
<svg class="a" style="left:710px;top:660.3px;" width="13" height="11" viewBox="0 0 13 11"><path d="M0.5 1.8H4.4L5.4 3H11.4V10.2H0.5Z" fill="#efe368" stroke="#8f8538" stroke-width=".7"/><path d="M1.2 4H10.4" stroke="#fbf6b0" stroke-width=".9"/><path d="M11.4 3.4V10.2H0.8" fill="none" stroke="#6f6626" stroke-width=".7"/></svg>
<svg class="a" style="left:698.1px;top:662.6px;" width="7" height="7" viewBox="0 0 7 7"><rect x="0.5" y="0.5" width="6" height="6" fill="#fff" stroke="#8c8c8c" stroke-width=".8"/><path d="M1.8 3.5H5.2" stroke="#222" stroke-width=".9"/></svg>
<span class="t" style="left:725.30px;top:655.80px;font-size:8.8px;color:#1a1a1a;letter-spacing:-0.337px;">Diges</span>
<div class="a" style="left:716px;top:679.2px;width:7.8px;height:0px;border-top:1px dotted #9a9a9a;"></div>
<svg class="a" style="left:723.8px;top:673.7px;" width="13" height="11" viewBox="0 0 13 11"><path d="M0.5 1.8H4.4L5.4 3H11.4V10.2H0.5Z" fill="#efe368" stroke="#8f8538" stroke-width=".7"/><path d="M1.2 4H10.4" stroke="#fbf6b0" stroke-width=".9"/><path d="M11.4 3.4V10.2H0.8" fill="none" stroke="#6f6626" stroke-width=".7"/></svg>
<span class="t" style="left:739.30px;top:669.20px;font-size:8.8px;color:#1a1a1a;letter-spacing:-0.353px;">Database</span>
<div class="a" style="left:716px;top:692.5px;width:7.8px;height:0px;border-top:1px dotted #9a9a9a;"></div>
<svg class="a" style="left:723.8px;top:687px;" width="13" height="11" viewBox="0 0 13 11"><path d="M0.5 1.8H4.4L5.4 3H11.4V10.2H0.5Z" fill="#efe368" stroke="#8f8538" stroke-width=".7"/><path d="M1.2 4H10.4" stroke="#fbf6b0" stroke-width=".9"/><path d="M11.4 3.4V10.2H0.8" fill="none" stroke="#6f6626" stroke-width=".7"/></svg>
<span class="t" style="left:739.30px;top:682.50px;font-size:8.8px;color:#1a1a1a;letter-spacing:-0.298px;">Settings</span>
<div class="a" style="left:702px;top:705.8px;width:8px;height:0px;border-top:1px dotted #9a9a9a;"></div>
<svg class="a" style="left:710px;top:700.3px;" width="13" height="11" viewBox="0 0 13 11"><path d="M0.5 1.8H4.4L5.4 3H11.4V10.2H0.5Z" fill="#efe368" stroke="#8f8538" stroke-width=".7"/><path d="M1.2 4H10.4" stroke="#fbf6b0" stroke-width=".9"/><path d="M11.4 3.4V10.2H0.8" fill="none" stroke="#6f6626" stroke-width=".7"/></svg>
<svg class="a" style="left:698.1px;top:702.6px;" width="7" height="7" viewBox="0 0 7 7"><rect x="0.5" y="0.5" width="6" height="6" fill="#fff" stroke="#8c8c8c" stroke-width=".8"/><path d="M1.8 3.5H5.2" stroke="#222" stroke-width=".9"/><path d="M3.5 1.8V5.2" stroke="#222" stroke-width=".9"/></svg>
<span class="t" style="left:725.30px;top:695.80px;font-size:8.8px;color:#1a1a1a;letter-spacing:-0.351px;">PlayRec</span>
<div class="a" style="left:702px;top:719.2px;width:8px;height:0px;border-top:1px dotted #9a9a9a;"></div>
<svg class="a" style="left:710px;top:713.7px;" width="13" height="11" viewBox="0 0 13 11"><path d="M0.5 1.8H4.4L5.4 3H11.4V10.2H0.5Z" fill="#efe368" stroke="#8f8538" stroke-width=".7"/><path d="M1.2 4H10.4" stroke="#fbf6b0" stroke-width=".9"/><path d="M11.4 3.4V10.2H0.8" fill="none" stroke="#6f6626" stroke-width=".7"/></svg>
<svg class="a" style="left:698.1px;top:716px;" width="7" height="7" viewBox="0 0 7 7"><rect x="0.5" y="0.5" width="6" height="6" fill="#fff" stroke="#8c8c8c" stroke-width=".8"/><path d="M1.8 3.5H5.2" stroke="#222" stroke-width=".9"/><path d="M3.5 1.8V5.2" stroke="#222" stroke-width=".9"/></svg>
<span class="t" style="left:725.30px;top:709.20px;font-size:8.8px;color:#1a1a1a;letter-spacing:-0.358px;">Programs</span>
<div class="a" style="left:702px;top:732.5px;width:8px;height:0px;border-top:1px dotted #9a9a9a;"></div>
<svg class="a" style="left:710px;top:727px;" width="13" height="11" viewBox="0 0 13 11"><path d="M0.5 1.8H4.4L5.4 3H11.4V10.2H0.5Z" fill="#efe368" stroke="#8f8538" stroke-width=".7"/><path d="M1.2 4H10.4" stroke="#fbf6b0" stroke-width=".9"/><path d="M11.4 3.4V10.2H0.8" fill="none" stroke="#6f6626" stroke-width=".7"/></svg>
<span class="t" style="left:725.30px;top:722.50px;font-size:8.8px;color:#1a1a1a;letter-spacing:-0.303px;">Protocol</span>
<div class="a" style="left:702px;top:745.8px;width:8px;height:0px;border-top:1px dotted #9a9a9a;"></div>
<svg class="a" style="left:710px;top:740.3px;" width="13" height="11" viewBox="0 0 13 11"><path d="M0.5 1.8H4.4L5.4 3H11.4V10.2H0.5Z" fill="#efe368" stroke="#8f8538" stroke-width=".7"/><path d="M1.2 4H10.4" stroke="#fbf6b0" stroke-width=".9"/><path d="M11.4 3.4V10.2H0.8" fill="none" stroke="#6f6626" stroke-width=".7"/></svg>
<svg class="a" style="left:698.1px;top:742.6px;" width="7" height="7" viewBox="0 0 7 7"><rect x="0.5" y="0.5" width="6" height="6" fill="#fff" stroke="#8c8c8c" stroke-width=".8"/><path d="M1.8 3.5H5.2" stroke="#222" stroke-width=".9"/><path d="M3.5 1.8V5.2" stroke="#222" stroke-width=".9"/></svg>
<span class="t" style="left:725.30px;top:735.80px;font-size:8.8px;color:#1a1a1a;letter-spacing:-0.315px;">SingleTrack</span>
<div class="a" style="left:682px;top:752px;width:246px;height:7px;overflow:hidden;">
<svg class="a" style="left:28px;top:1.6px" width="13" height="11" viewBox="0 0 13 11"><path d="M0.5 2.2H4.2L5.2 3.4H11.2V10.2H0.5Z" fill="#e6d65a" stroke="#7d7426" stroke-width=".7"/></svg>
<span class="t" style="left:43.3px;top:-2.6px;font-size:8.8px;color:#1a1a1a;">SQLAdmin</span>
<svg class="a" style="left:16px;top:4px" width="7" height="7" viewBox="0 0 7 7"><rect x="0.5" y="0.5" width="6" height="6" fill="#fff" stroke="#8c8c8c" stroke-width=".8"/></svg>
</div>
<div class="a" style="left:945.4px;top:445.2px;width:496.6px;height:14.8px;background:#f0f0f0;border-top:1.6px solid #7a7a7a;border-bottom:1.4px solid #8a8a8a;"></div>
<div class="a" style="left:1294.6px;top:446px;width:1.2px;height:14px;background:#8a8a8a;"></div>
<div class="a" style="left:681px;top:759px;width:761px;height:15.6px;background:#f0f0f0;"></div>
<span class="t" style="left:682.00px;top:758.20px;font-size:8.7px;color:#222;letter-spacing:-0.121px;">Bereit</span>
<div class="a" style="left:1372px;top:762px;width:13px;height:11.4px;border:1px solid;border-color:#b4b4b4 #fff #fff #b4b4b4;"></div>
<div class="a" style="left:1387.5px;top:762px;width:25px;height:11.4px;border:1px solid;border-color:#b4b4b4 #fff #fff #b4b4b4;"></div>
<div class="a" style="left:1414.5px;top:762px;width:13px;height:11.4px;border:1px solid;border-color:#b4b4b4 #fff #fff #b4b4b4;"></div>
<span class="t" style="left:1390.00px;top:758.20px;font-size:8.6px;color:#222;letter-spacing:0.138px;">NUM</span>
<svg class="a" style="left:1431px;top:763px;" width="11" height="11" viewBox="0 0 11 11"><path d="M10 2L2 10M10 5L5 10M10 8L8 10" stroke="#b0b0b0" stroke-width="1"/></svg>
<!-- Registry String Editor dialog -->
<div class="a" style="left:882.3px;top:428.2px;width:359px;height:304.2px;background:#f0f0f0;border:1px solid #6e6e6e;box-shadow:0 1px 4px rgba(0,0,0,.15);"></div>
<div class="a" style="left:883.3px;top:429.2px;width:357px;height:21.3px;background:#fff;"></div>
<span class="t" style="left:889.00px;top:429.30px;font-size:8.8px;color:#111;letter-spacing:-0.075px;">Registry String Editor</span>
<svg class="a" style="left:1224.6px;top:433.6px;" width="10" height="10" viewBox="0 0 10 10"><path d="M1.2 1.2L8.6 8.6M8.6 1.2L1.2 8.6" stroke="#222" stroke-width="1.1" fill="none"/></svg>
<span class="t" style="left:895.00px;top:456.70px;font-size:8.6px;color:#222;letter-spacing:-0.180px;">Eintrag:</span>
<span class="t" style="left:928.50px;top:456.70px;font-size:8.6px;color:#222;letter-spacing:-0.320px;">TreePath</span>
<div class="a" style="left:894.5px;top:480px;width:331px;height:210.5px;background:#fff;border:1.4px solid;border-color:#6a6a6a #e4e4e4 #e4e4e4 #6a6a6a;"></div>
<div class="a" style="left:1213.8px;top:481.4px;width:11px;height:208px;background:#f0f0f0;"></div>
<svg class="a" style="left:1214.6px;top:484.4px;" width="9" height="7" viewBox="0 0 9 7"><path d="M1.6 4.6L4.4 2L7.2 4.6" fill="none" stroke="#b8b8b8" stroke-width="1.1"/></svg>
<svg class="a" style="left:1214.6px;top:680px;" width="9" height="7" viewBox="0 0 9 7"><path d="M1.6 2L4.4 4.6L7.2 2" fill="none" stroke="#b8b8b8" stroke-width="1.1"/></svg>
<div class="a" style="left:898.7px;top:482px;width:87.2px;height:9.4px;background:#0a69d6;"></div>
<span class="t" style="left:899.60px;top:476.80px;font-size:8.2px;color:#fff;letter-spacing:-0.381px;">\\LRF-BCS02\BCS_DATA</span>
<div class="a" style="left:947.3px;top:702.4px;width:55.7px;height:16.6px;background:#f0f0f0;border:1px solid #3c3c3c;box-shadow:inset -1px -1px 0 #7a7a7a, inset 1px 1px 0 #fff;"></div>
<span class="t" style="left:969.56px;top:700.30px;font-size:8.6px;color:#111;letter-spacing:-0.621px;">OK</span>
<div class="a" style="left:1031px;top:702.4px;width:55.4px;height:16.6px;background:#f0f0f0;border:1px solid;border-color:#fff #6e6e6e #6e6e6e #fff;"></div>
<span class="t" style="left:1039.98px;top:700.30px;font-size:8.6px;color:#111;letter-spacing:-0.462px;">Abbrechen</span>
<div class="a" style="left:1113.6px;top:702.4px;width:20.6px;height:16.6px;background:#f0f0f0;border:1px solid;border-color:#fff #6e6e6e #6e6e6e #fff;"></div>
<span class="t" style="left:1117.66px;top:700.30px;font-size:8.6px;color:#111;letter-spacing:-0.346px;">File</span>
<div class="a" style="left:1158px;top:702.4px;width:20.4px;height:16.6px;background:#f0f0f0;border:1px solid;border-color:#fff #6e6e6e #6e6e6e #fff;"></div>
<span class="t" style="left:1163.26px;top:700.30px;font-size:8.6px;color:#111;letter-spacing:-0.366px;">Dir</span>
<svg class="a" style="left:1242.6px;top:561.4px;" width="12" height="19" viewBox="0 0 12 19"><path d="M0.8 0.8V14.2L4 11.2L6.4 16.8L8.6 15.8L6.2 10.4H10.4Z" fill="#fff" stroke="#222" stroke-width=".9" stroke-linejoin="round"/></svg>
<!-- remote taskbar -->
<div class="a" style="left:249px;top:932.5px;width:1422px;height:29.5px;background:#080d19;"></div>
<svg class="a" style="left:260.6px;top:941.4px;" width="12.4" height="12" viewBox="0 0 16 15.4"><path d="M0 2.2L6.6 1.2V7.2H0ZM7.6 1.05L16 0V7.2H7.6ZM0 8.2H6.6V14.2L0 13.2ZM7.6 8.2H16V15.4L7.6 14.35Z" fill="#fff"/></svg>
<svg class="a" style="left:296px;top:940.6px;" width="13" height="13" viewBox="0 0 16 16"><circle cx="10" cy="6" r="4.6" fill="none" stroke="#f0f0f0" stroke-width="1.5"/><path d="M6.6 9.4L1 15" stroke="#f0f0f0" stroke-width="1.8"/></svg>
<svg class="a" style="left:331.5px;top:941px;" width="13" height="12" viewBox="0 0 13 12"><g fill="none" stroke="#f0f0f0" stroke-width="1.2"><rect x="2.4" y="2.4" width="6" height="7"/><path d="M0.6 1V11M10.2 1V11M12.2 1V3.4M12.2 5V11"/></g></svg>
<svg class="a" style="left:366px;top:939.8px;" width="17" height="15.4" viewBox="0 0 17 15.4"><path d="M5.6 0.8L16.2 2.4V10L5.6 11.4Z" fill="#2f9ae8"/><path d="M6.8 2.4L15 3.6V9L6.8 10Z" fill="#5cc0f8"/><path d="M0.6 12.4L9 10.8L12.6 12.6L3.6 14.8Z" fill="#d5dce4"/></svg>
<span class="t" style="left:386.00px;top:937.50px;font-size:8.8px;color:#fff;letter-spacing:-0.367px;">Dieser PC</span>
<div class="a" style="left:360.6px;top:960.5px;width:112.8px;height:1.5px;background:#6f9fd4;"></div>
<svg class="a" style="left:486.7px;top:939.5px;" width="16" height="16" viewBox="0 0 20 20"><circle cx="10" cy="10" r="10" fill="#fbc116"/>
<path d="M10 10L1.34 5A10 10 0 0 1 18.66 5Z" fill="#e33b2e"/>
<path d="M10 10L1.34 5A10 10 0 0 0 10 20L14.3 12.5Z" fill="#2ba24c"/>
<path d="M10 10L18.66 5H10Z" fill="#e33b2e"/>
<circle cx="10" cy="10" r="4.6" fill="#fff"/><circle cx="10" cy="10" r="3.7" fill="#4285f4"/></svg>
<svg class="a" style="left:523.4px;top:942.4px;" width="15.4" height="10.8" viewBox="0 0 15.4 10.8"><rect width="15.4" height="10.8" fill="#3b9be6"/><rect x="1.6" y="1.6" width="6" height="5" fill="#d5e9fb"/><rect x="9" y="1.6" width="5" height="2" fill="#9dd0f8"/><rect x="9" y="4.6" width="5" height="2" fill="#9dd0f8"/><rect x="1.6" y="8" width="12.4" height="1.4" fill="#9dd0f8"/></svg>
<svg class="a" style="left:557px;top:940.5px;" width="16.7" height="13.4" viewBox="0 0 16.7 13.4"><rect width="16.7" height="13.4" fill="#101010" stroke="#6b6b6b" stroke-width="1"/><rect x="0.5" y="0.5" width="15.7" height="2" fill="#8a8a8a"/><path d="M3 6.4H7M8 8.6H11" stroke="#ddd" stroke-width="1"/></svg>
<span class="t" style="left:578.00px;top:937.50px;font-size:8.8px;color:#fff;letter-spacing:0.050px;">Eingabeaufforderung</span>
<div class="a" style="left:552.5px;top:960.5px;width:113px;height:1.5px;background:#6f9fd4;"></div>
<div class="a" style="left:669px;top:932.5px;width:118.4px;height:29.5px;background:#343d4b;"></div>
<div class="a" style="left:669px;top:960.5px;width:118.4px;height:1.5px;background:#8db5e2;"></div>
<svg class="a" style="left:676.4px;top:939.4px;" width="16.6" height="16.6" viewBox="0 0 13 13"><circle cx="6.4" cy="6.4" r="6.1" fill="#0d1470"/><path d="M5 1.4L8.4 1.2L7.4 4.2L9.6 6.6L8.8 10.8L6.4 9L5.8 5.4L3.6 4.2Z" fill="#d9c62e"/><path d="M1.4 7.4L3.6 8L4 10.6Z" fill="#d9c62e"/></svg>
<span class="t" style="left:697.30px;top:937.50px;font-size:8.8px;color:#fff;letter-spacing:-0.009px;">DigaSystem Admin...</span>
<svg class="a" style="left:1533.5px;top:944px;" width="10" height="7" viewBox="0 0 10 7"><path d="M0.8 5.8L4.8 1.6L8.8 5.8" fill="none" stroke="#f0f0f0" stroke-width="1.3"/></svg>
<svg class="a" style="left:1550px;top:942.6px;" width="13.4" height="11" viewBox="0 0 13.4 11"><g fill="none" stroke="#f0f0f0" stroke-width="1.1"><rect x="3.4" y="1" width="9.2" height="6.4"/><path d="M8 7.4V9.6M5.4 9.8H10.6M0.6 0.6V6M0.6 3H3.4"/></g></svg>
<svg class="a" style="left:1568px;top:942.6px;" width="13" height="11" viewBox="0 0 13 11"><path d="M0.8 3.6H2.8L5.4 1V9.6L2.8 7H0.8Z" fill="none" stroke="#f0f0f0" stroke-width="1"/><circle cx="9" cy="7.4" r="3" fill="#e8212e"/><path d="M7.8 6.2L10.2 8.6M10.2 6.2L7.8 8.6" stroke="#fff" stroke-width=".9"/></svg>
<span class="t" style="left:1597.80px;top:930.80px;font-size:8.4px;color:#fff;letter-spacing:-0.324px;">12:09</span>
<span class="t" style="left:1588.00px;top:944.00px;font-size:8.4px;color:#fff;letter-spacing:-0.202px;">19.11.2019</span>
<svg class="a" style="left:1640px;top:941.3px;" width="13" height="12" viewBox="0 0 13 12"><path d="M0.7 0.7H12.2V9H7.4L6 11L4.8 9H0.7Z" fill="none" stroke="#f0f0f0" stroke-width="1.2"/></svg>
<div class="a" style="left:1667.3px;top:933px;width:1px;height:29px;background:#7d8490;"></div>
<!-- teamviewer side panel -->
<div class="a" style="left:1485.5px;top:774px;width:184.7px;height:82.6px;background:#05245b;"></div>
<div class="a" style="left:1491.5px;top:780.2px;width:30px;height:29.6px;background:#0c4c86;"></div>
<svg class="a" style="left:1491.5px;top:780.2px;" width="30" height="29.6" viewBox="0 0 30 29.6"><circle cx="15" cy="14.8" r="12.2" fill="#a7adb5"/><path d="M3.8 14.8L10.4 10V13H19.6V10L26.2 14.8L19.6 19.6V16.6H10.4V19.6Z" fill="#0b3d73"/></svg>
<span class="t" style="left:1533.00px;top:782.30px;font-size:15.6px;color:#9da2aa;letter-spacing:0.523px;font-weight:bold;">Team</span>
<span class="t" style="left:1574.69px;top:782.30px;font-size:15.6px;color:#9da2aa;letter-spacing:0.418px;">Viewer</span>
<span class="t" style="left:1528.50px;top:796.30px;font-size:7.4px;color:#65738f;letter-spacing:0.400px;">Testlizenz (nur für</span>
<span class="t" style="left:1528.50px;top:806.20px;font-size:7.4px;color:#65738f;letter-spacing:0.425px;">Evaluierungszwecke)</span>
<svg class="a" style="left:1649.6px;top:792px;" width="9" height="9" viewBox="0 0 9 9"><path d="M1 1L8 8M8 1L1 8" stroke="#b2b6bd" stroke-width="1.8"/></svg>
<svg class="a" style="left:1495.3px;top:829.4px;" width="12.4" height="8.2" viewBox="0 0 12.4 8.2"><rect width="8.6" height="7.6" rx="1" fill="#9095a0"/><path d="M9 3L12.2 0.8V7L9 4.8Z" fill="#9095a0"/></svg>
<svg class="a" style="left:1520.6px;top:827.2px;" width="12.8" height="12.8" viewBox="0 0 12.8 12.8"><path d="M1.6 8V6A4.8 4.8 0 0 1 11.2 6V8" fill="none" stroke="#9095a0" stroke-width="1.3"/><rect x="0.4" y="6" width="2.6" height="4" rx="1" fill="#9095a0"/><rect x="9.8" y="6" width="2.6" height="4" rx="1" fill="#9095a0"/><path d="M11 10Q11 12 7 12" fill="none" stroke="#9095a0" stroke-width="1"/></svg>
<svg class="a" style="left:1545.5px;top:827.6px;" width="13" height="12" viewBox="0 0 13 12"><path d="M0.4 0.6H8.4V6H4L2 8V6H0.4Z" fill="#9095a0"/><path d="M5 7H9.6V3.4H12.6V9.4H11V11.2L9 9.4H5Z" fill="#9095a0"/></svg>
<svg class="a" style="left:1571.2px;top:827.2px;" width="11.4" height="12.6" viewBox="0 0 11.4 12.6"><rect x="0.5" y="0.5" width="7" height="8.6" fill="none" stroke="#9095a0" stroke-width="1"/><rect x="3" y="3" width="8" height="9.4" fill="#9095a0"/><path d="M4.4 5.4H9.6M4.4 7.4H9.6M4.4 9.4H9.6" stroke="#05245b" stroke-width=".8"/></svg>
<svg class="a" style="left:1596.5px;top:827px;" width="11.6" height="13" viewBox="0 0 11.6 13"><path d="M8 0.6L11 3.6L6.4 7.6L4.4 5.6Z" fill="#9095a0"/><path d="M3.8 6.2L6 8.4L3 12.4L0.4 9.6Z" fill="#9095a0"/></svg>
<svg class="a" style="left:1622.8px;top:829.6px;" width="9" height="8" viewBox="0 0 9 8"><path d="M4 0.8L1 4L4 7.2M8 0.8L5 4L8 7.2" fill="none" stroke="#9095a0" stroke-width="1.1"/></svg>
<div class="a" style="left:1485.5px;top:856.6px;width:184.7px;height:55.4px;background:#5b5b5d;"></div>
<svg class="a" style="left:1466px;top:856.6px;" width="20" height="34" viewBox="0 0 20 34"><path d="M2.4 0H20V34L1 21.6Q0 21 0 19.6V2.4Q0 0 2.4 0Z" fill="#5b5b5d"/><path d="M7.4 7.6L11.8 11.8L7.4 16" fill="none" stroke="#262626" stroke-width="1.1"/></svg>
<svg class="a" style="left:1490.2px;top:865px;" width="6.4" height="5" viewBox="0 0 6.4 5"><path d="M0 0.4H6.2L3.1 4.6Z" fill="#232323"/></svg>
<span class="t" style="left:1501.00px;top:857.80px;font-size:9.4px;color:#1f1f1f;letter-spacing:0.380px;">Verbindungsübersicht</span>
<svg class="a" style="left:1654px;top:862.6px;" width="12" height="9" viewBox="0 0 12 9"><circle cx="3.6" cy="4.4" r="2" fill="none" stroke="#3c3f46" stroke-width="1.6"/><circle cx="3.6" cy="4.4" r="3.3" fill="none" stroke="#3c3f46" stroke-width="1" stroke-dasharray="1.2 1.4"/><path d="M8.4 3.8H10.8L9.6 5.4Z" fill="#3c3f46"/></svg>
<div class="a" style="left:1491px;top:887.4px;width:13px;height:12.2px;background:#6e7074;border:1px solid #7d8085;"></div>
<svg class="a" style="left:1491px;top:887.4px;" width="13" height="12.2" viewBox="0 0 13 12.2"><circle cx="6.5" cy="4.6" r="2.6" fill="#3f4248"/><path d="M1.6 12.2Q1.6 7.8 6.5 7.8Q11.4 7.8 11.4 12.2Z" fill="#3f4248"/></svg>
<span class="t" style="left:1507.50px;top:883.60px;font-size:8px;color:#1c1c1c;letter-spacing:-0.176px;">NOTEBOOK-MMA (1 531 647 839)</span>
<svg class="a" style="left:1632px;top:891.4px;" width="6.8" height="5" viewBox="0 0 6.8 5"><path d="M0 0.4H6.6L3.3 4.6Z" fill="#232323"/></svg>
<svg class="a" style="left:1654.2px;top:889.4px;" width="9" height="9.6" viewBox="0 0 9 9.6"><path d="M0.4 0.4L8.4 3.6L5 5L7.6 8.2L6.4 9.2L3.8 6L1.8 8.4Z" fill="#1f55a8"/></svg>
<div class="a" style="left:1485.5px;top:912px;width:184.7px;height:20.5px;background:#1c1919;"></div>
<span class="t" style="left:1576.30px;top:911.20px;font-size:8.8px;color:#46536e;letter-spacing:0.133px;text-decoration:underline;">www.teamviewer.com</span>
<!-- skype self video overlay -->
<svg class="a" style="left:1612.5px;top:108.4px;box-shadow:0 1px 5px rgba(0,0,0,.6)" width="267" height="168.4" viewBox="0 0 267 168.4">
<defs>
<filter id="vb" x="-5%" y="-5%" width="110%" height="110%"><feGaussianBlur stdDeviation="0.9"/></filter>
<clipPath id="vc"><rect width="267" height="168.4"/></clipPath>
<linearGradient id="wallL" x1="0" x2="1"><stop offset="0" stop-color="#c6b697"/><stop offset=".5" stop-color="#d8cbb0"/><stop offset="1" stop-color="#cdbf9f"/></linearGradient>
<linearGradient id="ceil" x1="0" y1="0" x2="0" y2="1"><stop offset="0" stop-color="#a3adb3"/><stop offset="1" stop-color="#c3c9ca"/></linearGradient>
<linearGradient id="wallR" x1="0" x2="1"><stop offset="0" stop-color="#d2c8b2"/><stop offset="1" stop-color="#e4dcc9"/></linearGradient>
<linearGradient id="skin" x1="0" x2="1"><stop offset="0" stop-color="#a07458"/><stop offset="1" stop-color="#c29474"/></linearGradient>
</defs>
<g clip-path="url(#vc)"><g filter="url(#vb)">
<rect x="-4" y="-4" width="275" height="177" fill="#b4bab9"/>
<rect x="-4" y="-4" width="52" height="177" fill="url(#wallL)"/>
<path d="M-4 120H46V172H-4Z" fill="#b9aa8b" opacity=".7"/>
<path d="M47 -2H182V2L172 16H50Z" fill="#d2c8b2"/>
<path d="M50 4H172V66H50Z" fill="url(#ceil)"/>
<path d="M58 18L84 24L82 64L60 64Z" fill="#c9cbc6"/>
<path d="M84 24L150 26L142 52L120 66L100 66Z" fill="#b4bcc0" opacity=".8"/>
<path d="M150 26L172 12V70L128 70Z" fill="#a4acae"/>
<path d="M171 4H181V172H171Z" fill="#dfd7c3"/>
<path d="M180 0H271V172H180Z" fill="url(#wallR)"/>
<path d="M207 -2H271V112H214Z" fill="#f5f0e4"/>
<rect x="46" y="-2" width="5" height="174" fill="#c2b594"/>
<rect x="49.6" y="54" width="3.8" height="118" fill="#8b897f"/>
<rect x="52" y="64" width="106" height="8" fill="#555a63"/>
<rect x="53" y="72" width="104" height="51" fill="#9a9fa1"/>
<rect x="62" y="76" width="90" height="11" fill="#aaaeaf"/>
<rect x="55" y="103" width="13" height="18" fill="#15161a"/>
<rect x="74" y="92" width="28" height="31" fill="#2a2c33"/>
<rect x="76" y="99" width="24" height="3" fill="#bfc3c8"/><rect x="76" y="106" width="24" height="3" fill="#bfc3c8"/><rect x="76" y="113" width="24" height="3" fill="#bfc3c8"/>
<rect x="68" y="90" width="8" height="10" fill="#8a6b55"/>
<rect x="127" y="92" width="6" height="33" fill="#ecece8"/>
<rect x="114" y="90" width="9" height="34" fill="#8d9698"/>
<rect x="140" y="96" width="10" height="26" fill="#bfc1bd"/>
<rect x="52" y="122.4" width="110" height="7.4" fill="#5b5f69"/>
<rect x="54" y="130" width="106" height="42" fill="#54575d"/>
<rect x="60" y="133" width="62" height="13" fill="#242529"/>
<rect x="60" y="148" width="74" height="7" fill="#8f9194"/>
<rect x="60" y="157" width="74" height="6" fill="#3a3c42"/>
<rect x="156.6" y="66" width="3.8" height="106" fill="#7c8186"/>
<rect x="160" y="118" width="9" height="16" fill="#d8b628"/>
<path d="M76 172Q96 150 126 145L182 142L267 156V172Z" fill="#6c2228"/>
<path d="M200 172L206 158L232 160L240 172Z" fill="#e9dfe0"/>
<path d="M214 172L228 152L267 160V172Z" fill="#75262d"/>
<path d="M160.5 90Q160 52 198 46.4Q222 45 232 60Q240 74 241.6 92Q236 100 234 108L230 132Q214 146 196 138Q170 128 160.5 90Z" fill="url(#skin)"/>
<path d="M160.5 92Q159 54 196 46.6Q214 45 224 52Q202 56 192 72Q184 88 186 108L176 118Q162 108 160.5 92Z" fill="#684c39"/>
<ellipse cx="172.6" cy="99" rx="5.4" ry="9.6" fill="#b08165"/>
<path d="M178 101Q183 96 187 100L193 110Q204 118 220 112L229 116Q232 130 226 140Q212 148 196 142Q184 132 178 101Z" fill="#3a261c"/>
<path d="M222 112Q232 100 250 104L267 110V152L240 148Q232 140 226 132Q220 122 222 112Z" fill="#c19173"/>
<path d="M230 128Q244 122 262 130" fill="none" stroke="#9a6d54" stroke-width="1.6"/>
<path d="M212 76L230 73L228 79L214 80Z" fill="#3a2a22"/>
<path d="M232 84L242 94L234 97Z" fill="#a8775c"/>
</g></g></svg>
<div class="a" style="left:1644px;top:230.4px;width:36px;height:36px;background:#fff;border-radius:50%;"></div>
<div class="a" style="left:1700.4px;top:230.4px;width:36px;height:36px;background:#fff;border-radius:50%;"></div>
<div class="a" style="left:1755.4px;top:230.4px;width:36px;height:36px;background:#ff4a2b;border-radius:50%;"></div>
<div class="a" style="left:1811px;top:230.4px;width:36px;height:36px;background:#fff;border-radius:50%;"></div>
<svg class="a" style="left:1654px;top:237.6px;" width="16" height="22" viewBox="0 0 16 22"><g fill="none" stroke="#3a3b42" stroke-width="1.4" stroke-linecap="round"><rect x="4.2" y="0.8" width="7.6" height="12.6" rx="3.8"/><path d="M1.2 9.6Q1.2 17 8 17Q14.8 17 14.8 9.6M8 17V21"/></g></svg>
<svg class="a" style="left:1708px;top:242px;" width="22" height="13" viewBox="0 0 22 13"><g fill="none" stroke="#3a3b42" stroke-width="1.4" stroke-linejoin="round"><rect x="1" y="1" width="13.4" height="10.8" rx="2"/><path d="M14.4 5L20.4 1.8V11L14.4 7.8Z"/></g></svg>
<svg class="a" style="left:1762.5px;top:242.6px;" width="22" height="11" viewBox="0 0 22 11"><path d="M1.6 8.2Q0.4 4.6 4.2 2.8Q11 0 17.8 2.8Q21.6 4.6 20.4 8.2L19.6 9Q19 9.6 18.2 9.2L15 8Q14.4 7.6 14.6 6.8L14.8 5.4Q11 4.2 7.2 5.4L7.4 6.8Q7.6 7.6 7 8L3.8 9.2Q3 9.6 2.4 9Z" fill="none" stroke="#fff" stroke-width="1.3" stroke-linejoin="round"/></svg>
<svg class="a" style="left:1819px;top:238.6px;" width="21" height="20" viewBox="0 0 21 20"><g fill="none" stroke="#3a3b42" stroke-width="1.4"><rect x="1" y="7.4" width="12" height="11" rx="2"/><path d="M6.6 7.4V3.4Q6.6 1 9 1H17.4Q19.8 1 19.8 3.4V10.2Q19.8 12.6 17.4 12.6H13"/></g></svg>
<!-- host taskbar -->
<div class="a" style="left:12px;top:1110px;width:1896px;height:37px;background:#070c17;"></div>
<svg class="a" style="left:26.7px;top:1120.8px;" width="15.4" height="15" viewBox="0 0 16 15.4"><path d="M0 2.2L6.6 1.2V7.2H0ZM7.6 1.05L16 0V7.2H7.6ZM0 8.2H6.6V14.2L0 13.2ZM7.6 8.2H16V15.4L7.6 14.35Z" fill="#fff"/></svg>
<svg class="a" style="left:70.5px;top:1119.6px;" width="17" height="17" viewBox="0 0 16 16"><circle cx="10" cy="6" r="4.6" fill="none" stroke="#f0f0f0" stroke-width="1.3"/><path d="M6.6 9.4L1 15" stroke="#f0f0f0" stroke-width="1.6"/></svg>
<svg class="a" style="left:111.7px;top:1118.2px;" width="22" height="22" viewBox="0 0 22 22"><path d="M0.6 3.2L11 1V18L0.6 15.8Z" fill="#0a6fd0"/><rect x="10" y="4.6" width="9" height="9" fill="#2b8ae6"/><path d="M11 5.6H18L14.5 9Z" fill="#fff"/><rect x="9.4" y="12.6" width="12" height="8.6" fill="#f1b262"/><path d="M9.4 12.6L15.4 17.4L21.4 12.6" fill="none" stroke="#fbe3bd" stroke-width="1"/></svg>
<span class="t" style="left:112.52px;top:1118.20px;font-size:11px;color:#fff;font-weight:bold;">O</span>
<span class="t" style="left:135.70px;top:1119.30px;font-size:11.3px;color:#fff;letter-spacing:-0.255px;">Inbox - ...</span>
<div class="a" style="left:107.7px;top:1145px;width:75.6px;height:2px;background:#76b9ed;"></div>
<svg class="a" style="left:195px;top:1117.3px;" width="21" height="23" viewBox="0 0 21 23"><path d="M0 0H8Q21 0 21 11.5Q21 23 8 23H0Z" fill="#4058b0"/><path d="M0 2.6H12Q16 3.6 17.8 6.4H0ZM0 9H20Q20.8 10.6 20.6 12.4H0ZM0 15.4H19.4Q18.4 17.8 16.6 19H0Z" fill="#35b0e0"/></svg>
<span class="t" style="left:220.00px;top:1119.30px;font-size:11.3px;color:#fff;letter-spacing:-0.368px;">DigaSy...</span>
<div class="a" style="left:192.3px;top:1145px;width:76px;height:2px;background:#76b9ed;"></div>
<svg class="a" style="left:281.7px;top:1118px;" width="20" height="20" viewBox="0 0 20 20"><circle cx="10" cy="10" r="9.6" fill="#e6ecef"/><path d="M3 6Q8 0 16 4Q10 4 7.4 9Q5 14 8 18Q2 15 3 6Z" fill="#2f8a3c"/><path d="M9 9Q13 6 16 9Q18 13 14 16Q17 12 13.6 10.4Q11 9.6 9 9Z" fill="#2e67c8"/></svg>
<svg class="a" style="left:319.1px;top:1118.1px;" width="20.4" height="20.4" viewBox="0 0 20 20"><circle cx="10" cy="10" r="10" fill="#fbc116"/>
<path d="M10 10L1.34 5A10 10 0 0 1 18.66 5Z" fill="#e33b2e"/>
<path d="M10 10L1.34 5A10 10 0 0 0 10 20L14.3 12.5Z" fill="#2ba24c"/>
<path d="M10 10L18.66 5H10Z" fill="#e33b2e"/>
<circle cx="10" cy="10" r="4.6" fill="#fff"/><circle cx="10" cy="10" r="3.7" fill="#4285f4"/></svg>
<span class="t" style="left:344.00px;top:1119.30px;font-size:11.3px;color:#fff;letter-spacing:-0.490px;">Accoun...</span>
<div class="a" style="left:315.7px;top:1145px;width:76px;height:2px;background:#76b9ed;"></div>
<svg class="a" style="left:403.1px;top:1118.1px;" width="20.4" height="20.4" viewBox="0 0 20 20"><circle cx="10" cy="10" r="10" fill="#fbc116"/>
<path d="M10 10L1.34 5A10 10 0 0 1 18.66 5Z" fill="#e33b2e"/>
<path d="M10 10L1.34 5A10 10 0 0 0 10 20L14.3 12.5Z" fill="#2ba24c"/>
<path d="M10 10L18.66 5H10Z" fill="#e33b2e"/>
<circle cx="10" cy="10" r="4.6" fill="#fff"/><circle cx="10" cy="10" r="3.7" fill="#4285f4"/></svg>
<span class="t" style="left:427.70px;top:1119.30px;font-size:11.3px;color:#fff;letter-spacing:-0.534px;">Accoun...</span>
<div class="a" style="left:399px;top:1145px;width:76px;height:2px;background:#76b9ed;"></div>
<svg class="a" style="left:486.5px;top:1118.1px;" width="20.4" height="20.4" viewBox="0 0 20 20"><circle cx="10" cy="10" r="10" fill="#fbc116"/>
<path d="M10 10L1.34 5A10 10 0 0 1 18.66 5Z" fill="#e33b2e"/>
<path d="M10 10L1.34 5A10 10 0 0 0 10 20L14.3 12.5Z" fill="#2ba24c"/>
<path d="M10 10L18.66 5H10Z" fill="#e33b2e"/>
<circle cx="10" cy="10" r="4.6" fill="#fff"/><circle cx="10" cy="10" r="3.7" fill="#4285f4"/></svg>
<span class="t" style="left:511.00px;top:1119.30px;font-size:11.3px;color:#fff;letter-spacing:-0.553px;">WhatsA...</span>
<div class="a" style="left:482.3px;top:1145px;width:76px;height:2px;background:#76b9ed;"></div>
<svg class="a" style="left:569.8px;top:1118.1px;" width="20.4" height="20.4" viewBox="0 0 20 20"><circle cx="10" cy="10" r="10" fill="#fbc116"/>
<path d="M10 10L1.34 5A10 10 0 0 1 18.66 5Z" fill="#e33b2e"/>
<path d="M10 10L1.34 5A10 10 0 0 0 10 20L14.3 12.5Z" fill="#2ba24c"/>
<path d="M10 10L18.66 5H10Z" fill="#e33b2e"/>
<circle cx="10" cy="10" r="4.6" fill="#fff"/><circle cx="10" cy="10" r="3.7" fill="#4285f4"/></svg>
<span class="t" style="left:594.00px;top:1119.30px;font-size:11.3px;color:#fff;letter-spacing:-0.695px;">IBC 201...</span>
<div class="a" style="left:565.7px;top:1145px;width:76.3px;height:2px;background:#76b9ed;"></div>
<svg class="a" style="left:653.3px;top:1117px;" width="22" height="23" viewBox="0 0 22 23"><circle cx="6" cy="6" r="5" fill="#d8d8d8"/><path d="M6 6L9 2" stroke="#555" stroke-width="1"/><rect x="3" y="11" width="5" height="5" fill="#fff"/><rect x="10" y="8" width="4" height="4" fill="#ddd"/><rect x="3" y="17" width="9" height="5" fill="#eee"/><rect x="13" y="13" width="4" height="9" fill="#fff"/><rect x="18" y="6" width="2" height="16" fill="#ccc"/><path d="M5 19.6H10M7.6 17.6V21.6" stroke="#222" stroke-width="1"/></svg>
<span class="t" style="left:679.00px;top:1119.30px;font-size:11.3px;color:#fff;letter-spacing:-0.468px;">DigAIR...</span>
<div class="a" style="left:650px;top:1145px;width:76.7px;height:2px;background:#76b9ed;"></div>
<svg class="a" style="left:740px;top:1118px;" width="21" height="21" viewBox="0 0 21 21"><ellipse cx="10" cy="7" rx="9" ry="6" fill="#f2f2f2" stroke="#d6574a" stroke-width="1.4"/><path d="M4 20L14 6M16 20L7 7" stroke="#3d6fc4" stroke-width="1.6"/><circle cx="4.6" cy="18.6" r="2" fill="none" stroke="#3d6fc4" stroke-width="1.2"/><circle cx="15.6" cy="18.6" r="2" fill="none" stroke="#3d6fc4" stroke-width="1.2"/></svg>
<svg class="a" style="left:778.3px;top:1119.6px;" width="21" height="17" viewBox="0 0 21 17"><rect x="0.5" y="0.5" width="20" height="16" fill="#0b0b0b" stroke="#8c8c8c" stroke-width="1"/><rect x="1" y="1" width="19" height="2.4" fill="#9a9a9a"/><path d="M3 6.4H9" stroke="#ccc" stroke-width="1"/></svg>
<svg class="a" style="left:818.3px;top:1117px;" width="23" height="22" viewBox="0 0 23 22"><path d="M2 20L5 13L16 3L20 7L9 17Z" fill="#2540c8"/><path d="M16 3L19 0.6L22 4L20 7Z" fill="#d84a3a"/><path d="M2 20L5 13L9 17Z" fill="#0f1a60"/></svg>
<svg class="a" style="left:856.7px;top:1117.4px;" width="22.4" height="22" viewBox="0 0 22.4 22"><rect width="22.4" height="22" fill="#5bd13a"/><rect x="1" y="1" width="20.4" height="20" fill="none" stroke="#8cea6a" stroke-width="1"/><path d="M6 3.6L18.6 11L6 18.4Z" fill="#6a6a6a" stroke="#3a3a3a" stroke-width=".8"/></svg>
<svg class="a" style="left:896px;top:1117px;" width="22.4" height="23" viewBox="0 0 22.4 23"><rect x="8" y="6" width="13" height="11" fill="#5aa6ec" stroke="#dfe6ee" stroke-width="1.4"/><rect x="11" y="18" width="7" height="2" fill="#cfd6de"/><rect x="9" y="20" width="11" height="1.8" fill="#b9c2cc"/><circle cx="6" cy="6" r="4.6" fill="#e4e4e4"/><path d="M3 12L9 8" stroke="#bbb" stroke-width="2"/></svg>
<svg class="a" style="left:935px;top:1117px;" width="22.7" height="23" viewBox="0 0 22.7 23"><rect width="22.7" height="23" rx="4.4" fill="#1d6fd0"/><path d="M4 15Q2 11 6 10Q7 5 12 6.4Q16 4 18 9Q21.6 10 20 14.6Q19.4 16 17.6 16H6Q4.6 16 4 15Z" fill="#f4f7fa"/><path d="M8 14L12 9L13.6 11L16.4 8.4L14.6 13.6L12.6 12.4Z" fill="#d63a2c"/></svg>
<svg class="a" style="left:975px;top:1117.6px;" width="22" height="22" viewBox="0 0 22 22"><circle cx="11" cy="11" r="6.6" fill="none" stroke="#c8862a" stroke-width="4.4" stroke-dasharray="3.2 2"/><circle cx="11" cy="11" r="3" fill="#6a4a22"/><rect x="14" y="14" width="3" height="5" fill="#2fa84a"/><rect x="17.6" y="12" width="3" height="7" fill="#d8392e"/><rect x="11" y="15.6" width="2.6" height="4" fill="#3a6fd8"/></svg>
<div class="a" style="left:1014px;top:1117.4px;width:22px;height:22.6px;background:#8cb82e;"></div>
<svg class="a" style="left:1014px;top:1117.4px;" width="22" height="22.6" viewBox="0 0 22 22.6"><circle cx="7.6" cy="11.4" r="3.6" fill="none" stroke="#f4f8e6" stroke-width="2"/><circle cx="7.6" cy="11.4" r="5.6" fill="none" stroke="#f4f8e6" stroke-width="1.4" stroke-dasharray="1.6 1.6"/><path d="M14 7L16.6 11.4L19.2 7M16.6 11.4V16" fill="none" stroke="#f4f8e6" stroke-width="1.6"/></svg>
<div class="a" style="left:1052.7px;top:1117.4px;width:23.3px;height:22.6px;background:#a8201e;"></div>
<span class="t" style="left:1054.80px;top:1113.40px;font-size:5.6px;color:#f4d8d6;letter-spacing:-0.182px;font-weight:bold;">TURBO</span>
<span class="t" style="left:1054.80px;top:1123.60px;font-size:5.4px;color:#fff;letter-spacing:-0.401px;font-weight:bold;font-style:italic;">PLAYER</span>
<div class="a" style="left:1054px;top:1128px;width:20.6px;height:0.9px;background:#e8b0ac;"></div>
<svg class="a" style="left:1091.5px;top:1117.4px;" width="21.4" height="21.8" viewBox="0 0 21.4 21.8"><circle cx="10.7" cy="10.9" r="8.6" fill="#13a3ea"/><circle cx="5.6" cy="5.6" r="5.2" fill="#13a3ea"/><circle cx="15.8" cy="16.2" r="5.2" fill="#13a3ea"/></svg>
<span class="t" style="left:1097.36px;top:1118.40px;font-size:14.5px;color:#fff;font-weight:bold;">S</span>
<span class="t" style="left:1116.00px;top:1119.30px;font-size:11.3px;color:#fff;letter-spacing:-0.481px;">Skype</span>
<div class="a" style="left:1086.7px;top:1145px;width:77.3px;height:2px;background:#76b9ed;"></div>
<svg class="a" style="left:1175px;top:1117.4px;" width="21.4" height="21.8" viewBox="0 0 21.4 21.8"><circle cx="10.7" cy="10.9" r="8.6" fill="#13a3ea"/><circle cx="5.6" cy="5.6" r="5.2" fill="#13a3ea"/><circle cx="15.8" cy="16.2" r="5.2" fill="#13a3ea"/></svg>
<span class="t" style="left:1180.86px;top:1118.40px;font-size:14.5px;color:#fff;font-weight:bold;">S</span>
<span class="t" style="left:1200.00px;top:1119.30px;font-size:11.3px;color:#fff;letter-spacing:-0.621px;">Skype</span>
<div class="a" style="left:1170.7px;top:1145px;width:76.6px;height:2px;background:#76b9ed;"></div>
<svg class="a" style="left:1259px;top:1117.4px;" width="22" height="22" viewBox="0 0 22 22"><circle cx="11" cy="11" r="10.4" fill="#0d1470"/><path d="M8.6 2.4L14.4 2L12.6 7.2L16.4 11.2L15 18.4L11 15.4L10 9.2L6.2 7.2Z" fill="#d9c62e"/><path d="M2.4 12.6L6.2 13.6L6.8 18Z" fill="#d9c62e"/><path d="M13 19L16 13L18 20Z" fill="#9a9a9a"/></svg>
<span class="t" style="left:1284.00px;top:1119.30px;font-size:11.3px;color:#fff;letter-spacing:-0.334px;">DigaSy...</span>
<div class="a" style="left:1254.3px;top:1145px;width:77.4px;height:2px;background:#76b9ed;"></div>
<svg class="a" style="left:1343.3px;top:1117.6px;" width="21.6" height="21.6" viewBox="0 0 16 16"><rect width="16" height="16" rx="1" fill="#1373d6"/><circle cx="8" cy="8" r="6.2" fill="#fff"/><path d="M2.8 8L6 5.6V7.2H10V5.6L13.2 8L10 10.4V8.8H6V10.4Z" fill="#0e5fc0"/></svg>
<span class="t" style="left:1368.30px;top:1119.30px;font-size:11.3px;color:#fff;letter-spacing:-0.499px;">TeamVi...</span>
<div class="a" style="left:1340px;top:1145px;width:76px;height:2px;background:#76b9ed;"></div>
<div class="a" style="left:1420px;top:1110px;width:82.7px;height:37px;background:#393d46;"></div>
<svg class="a" style="left:1426.7px;top:1117.6px;" width="21.6" height="21.6" viewBox="0 0 16 16"><rect width="16" height="16" rx="1" fill="#1373d6"/><circle cx="8" cy="8" r="6.2" fill="#fff"/><path d="M2.8 8L6 5.6V7.2H10V5.6L13.2 8L10 10.4V8.8H6V10.4Z" fill="#0e5fc0"/></svg>
<span class="t" style="left:1451.70px;top:1119.30px;font-size:11.3px;color:#fff;letter-spacing:-1.025px;">LRF-BC...</span>
<div class="a" style="left:1420px;top:1145px;width:82.7px;height:2px;background:#9fd0f6;"></div>
<svg class="a" style="left:1509.6px;top:1117.6px;" width="21.6" height="21.6" viewBox="0 0 16 16"><rect width="16" height="16" rx="1" fill="#1373d6"/><circle cx="8" cy="8" r="6.2" fill="#fff"/><path d="M2.8 8L6 5.6V7.2H10V5.6L13.2 8L10 10.4V8.8H6V10.4Z" fill="#0e5fc0"/></svg>
<span class="t" style="left:1535.00px;top:1119.30px;font-size:11.3px;color:#fff;letter-spacing:-0.957px;">BCS Bu...</span>
<div class="a" style="left:1506.7px;top:1145px;width:76px;height:2px;background:#76b9ed;"></div>
<svg class="a" style="left:1595px;top:1117.6px;" width="20" height="22" viewBox="0 0 20 22"><path d="M7 1L19 3L14 21L1 18Z" fill="#dfeaf2" stroke="#8fa4b4" stroke-width=".8"/><path d="M7 1L19 3L17.6 8L5.6 6Z" fill="#8cc0e6"/><path d="M1 18L14 21L12 21.8L0.4 19.6Z" fill="#5f7686"/></svg>
<span class="t" style="left:1619.00px;top:1119.30px;font-size:11.3px;color:#fff;letter-spacing:-0.215px;">Untitle...</span>
<div class="a" style="left:1590.7px;top:1145px;width:76px;height:2px;background:#76b9ed;"></div>
<svg class="a" style="left:1678px;top:1123px;" width="12.4" height="9" viewBox="0 0 12.4 9"><path d="M0.8 7.6L6.2 1.6L11.6 7.6" fill="none" stroke="#f0f0f0" stroke-width="1.4"/></svg>
<svg class="a" style="left:1699px;top:1122px;" width="15.4" height="11" viewBox="0 0 15.4 11"><rect x="1.6" y="2.6" width="12.6" height="7.6" fill="none" stroke="#f0f0f0" stroke-width="1.1"/><rect x="3.2" y="4.2" width="9.4" height="4.4" fill="#f0f0f0"/><rect x="0" y="5" width="1.6" height="3" fill="#f0f0f0"/><path d="M2 0.6L4 2.6M4.6 0V2" stroke="#f0f0f0" stroke-width=".9"/></svg>
<svg class="a" style="left:1720.6px;top:1121.6px;" width="16" height="13" viewBox="0 0 16 13"><path d="M0.8 4.4H3L6 1.6V11.4L3 8.6H0.8Z" fill="none" stroke="#f0f0f0" stroke-width="1.1"/><path d="M8.4 4.4Q10 6.5 8.4 8.6M10.4 2.8Q13 6.5 10.4 10.2M12.4 1.2Q16 6.5 12.4 11.8" fill="none" stroke="#f0f0f0" stroke-width="1"/></svg>
<svg class="a" style="left:1743.3px;top:1122px;" width="16" height="13" viewBox="0 0 16 13"><g fill="none" stroke="#f0f0f0" stroke-width="1.1"><rect x="4" y="1" width="11" height="7.6"/><path d="M9.4 8.6V11M6.4 11.4H12.6M0.8 0.4V7M0.8 3.4H4"/></g></svg>
<span class="t" style="left:1768.30px;top:1119.30px;font-size:10.6px;color:#fff;letter-spacing:-0.657px;">ENG</span>
<span class="t" style="left:1814.30px;top:1110.00px;font-size:11.2px;color:#fff;letter-spacing:-0.446px;">12:09</span>
<span class="t" style="left:1801.70px;top:1127.30px;font-size:11.2px;color:#fff;letter-spacing:-0.362px;">19.11.2019</span>
<svg class="a" style="left:1870px;top:1121px;" width="17" height="22" viewBox="0 0 17 22"><path d="M0.8 0.8H15.2V11.6H9L5.6 15V11.6H0.8Z" fill="#f4f4f4"/><path d="M3.4 3.8H12.6M3.4 6.2H12.6M3.4 8.6H12.6" stroke="#070c17" stroke-width="1"/><circle cx="14.3" cy="15" r="6.2" fill="#1a1f2a" stroke="#cfd2d6" stroke-width="1"/></svg>
<span class="t" style="left:1881.69px;top:1126.20px;font-size:9.4px;color:#fff;">4</span>
<div class="a" style="left:1904px;top:1112px;width:1px;height:35px;background:#5b6270;"></div>
<!-- faint skype call controls -->
<div class="a" style="left:12px;top:1040px;width:1896px;height:70px;background:linear-gradient(to bottom,rgba(0,0,0,0),rgba(0,0,0,.22));"></div>
<svg class="a" style="left:20.6px;top:1082.6px;" width="19" height="18.4" viewBox="0 0 19 18.4"><g fill="none" stroke="#2b2b2e" stroke-width="1.5"><path d="M1 5V1H5M14 1H18V5M18 13.4V17.4H14M5 17.4H1V13.4"/><circle cx="9.5" cy="9.2" r="3"/></g></svg>
<div class="a" style="left:878.3px;top:1070px;width:43.4px;height:43.4px;background:rgba(40,40,44,.28);border-radius:50%;"></div>
<div class="a" style="left:938.1px;top:1069.8px;width:43.8px;height:43.8px;background:#29292b;border-radius:50%;"></div>
<div class="a" style="left:998.1px;top:1069.8px;width:43.8px;height:43.8px;background:#2b1a1a;border-radius:50%;"></div>
<svg class="a" style="left:890px;top:1080px;" width="20" height="24" viewBox="0 0 20 24"><g fill="none" stroke="#2e2e31" stroke-width="1.4" stroke-linecap="round"><rect x="7" y="2" width="6" height="11" rx="3"/><path d="M4 10Q4 16 10 16Q16 16 16 10M10 16V20M2 21L18 3"/></g></svg>
<svg class="a" style="left:951px;top:1086px;" width="20" height="12" viewBox="0 0 20 12"><g fill="none" stroke="#3b3b3e" stroke-width="1.3"><rect x="1" y="1" width="11.6" height="9.6" rx="1.6"/><path d="M12.6 4.6L18 1.8V9.8L12.6 7Z"/></g></svg>
<svg class="a" style="left:1010px;top:1087px;" width="20" height="10" viewBox="0 0 20 10"><path d="M1.6 7.4Q0.6 4.2 4 2.6Q10 0.2 16 2.6Q19.4 4.2 18.4 7.4L17.6 8.2L13.4 6.8L13.4 5Q10 4 6.6 5L6.6 6.8L2.4 8.2Z" fill="none" stroke="#47292a" stroke-width="1.2"/></svg>
<svg class="a" style="left:1700.6px;top:1082px;" width="20" height="20" viewBox="0 0 20 20"><g fill="none" stroke="#2b2b2e" stroke-width="1.4"><path d="M1 2H17V14H9L5 18V14H1Z"/><path d="M4.6 6H13M4.6 9.6H10"/></g><circle cx="18.6" cy="1.6" r="1.6" fill="#3a2020"/></svg>
<svg class="a" style="left:1760.6px;top:1082.6px;" width="19" height="18" viewBox="0 0 19 18"><g fill="none" stroke="#2b2b2e" stroke-width="1.4"><rect x="1" y="6.4" width="11" height="10.6" rx="1.6"/><path d="M6 6.4V3Q6 1 8 1H16Q18 1 18 3V9.6Q18 11.6 16 11.6H12"/></g></svg>
<svg class="a" style="left:1817px;top:1081px;" width="26" height="22" viewBox="0 0 26 22"><path d="M13 21Q1 12 1 6.4Q1 1 6.6 1Q10.6 1 13 4.6Q15.4 1 19.4 1Q25 1 25 6.4Q25 12 13 21Z" fill="#341a1a"/></svg>
<svg class="a" style="left:1881px;top:1089.6px;" width="19" height="4" viewBox="0 0 19 4"><circle cx="2" cy="2" r="1.6" fill="#2b2b2e"/><circle cx="9.4" cy="2" r="1.6" fill="#2b2b2e"/><circle cx="16.8" cy="2" r="1.6" fill="#2b2b2e"/></svg>
</body></html>
